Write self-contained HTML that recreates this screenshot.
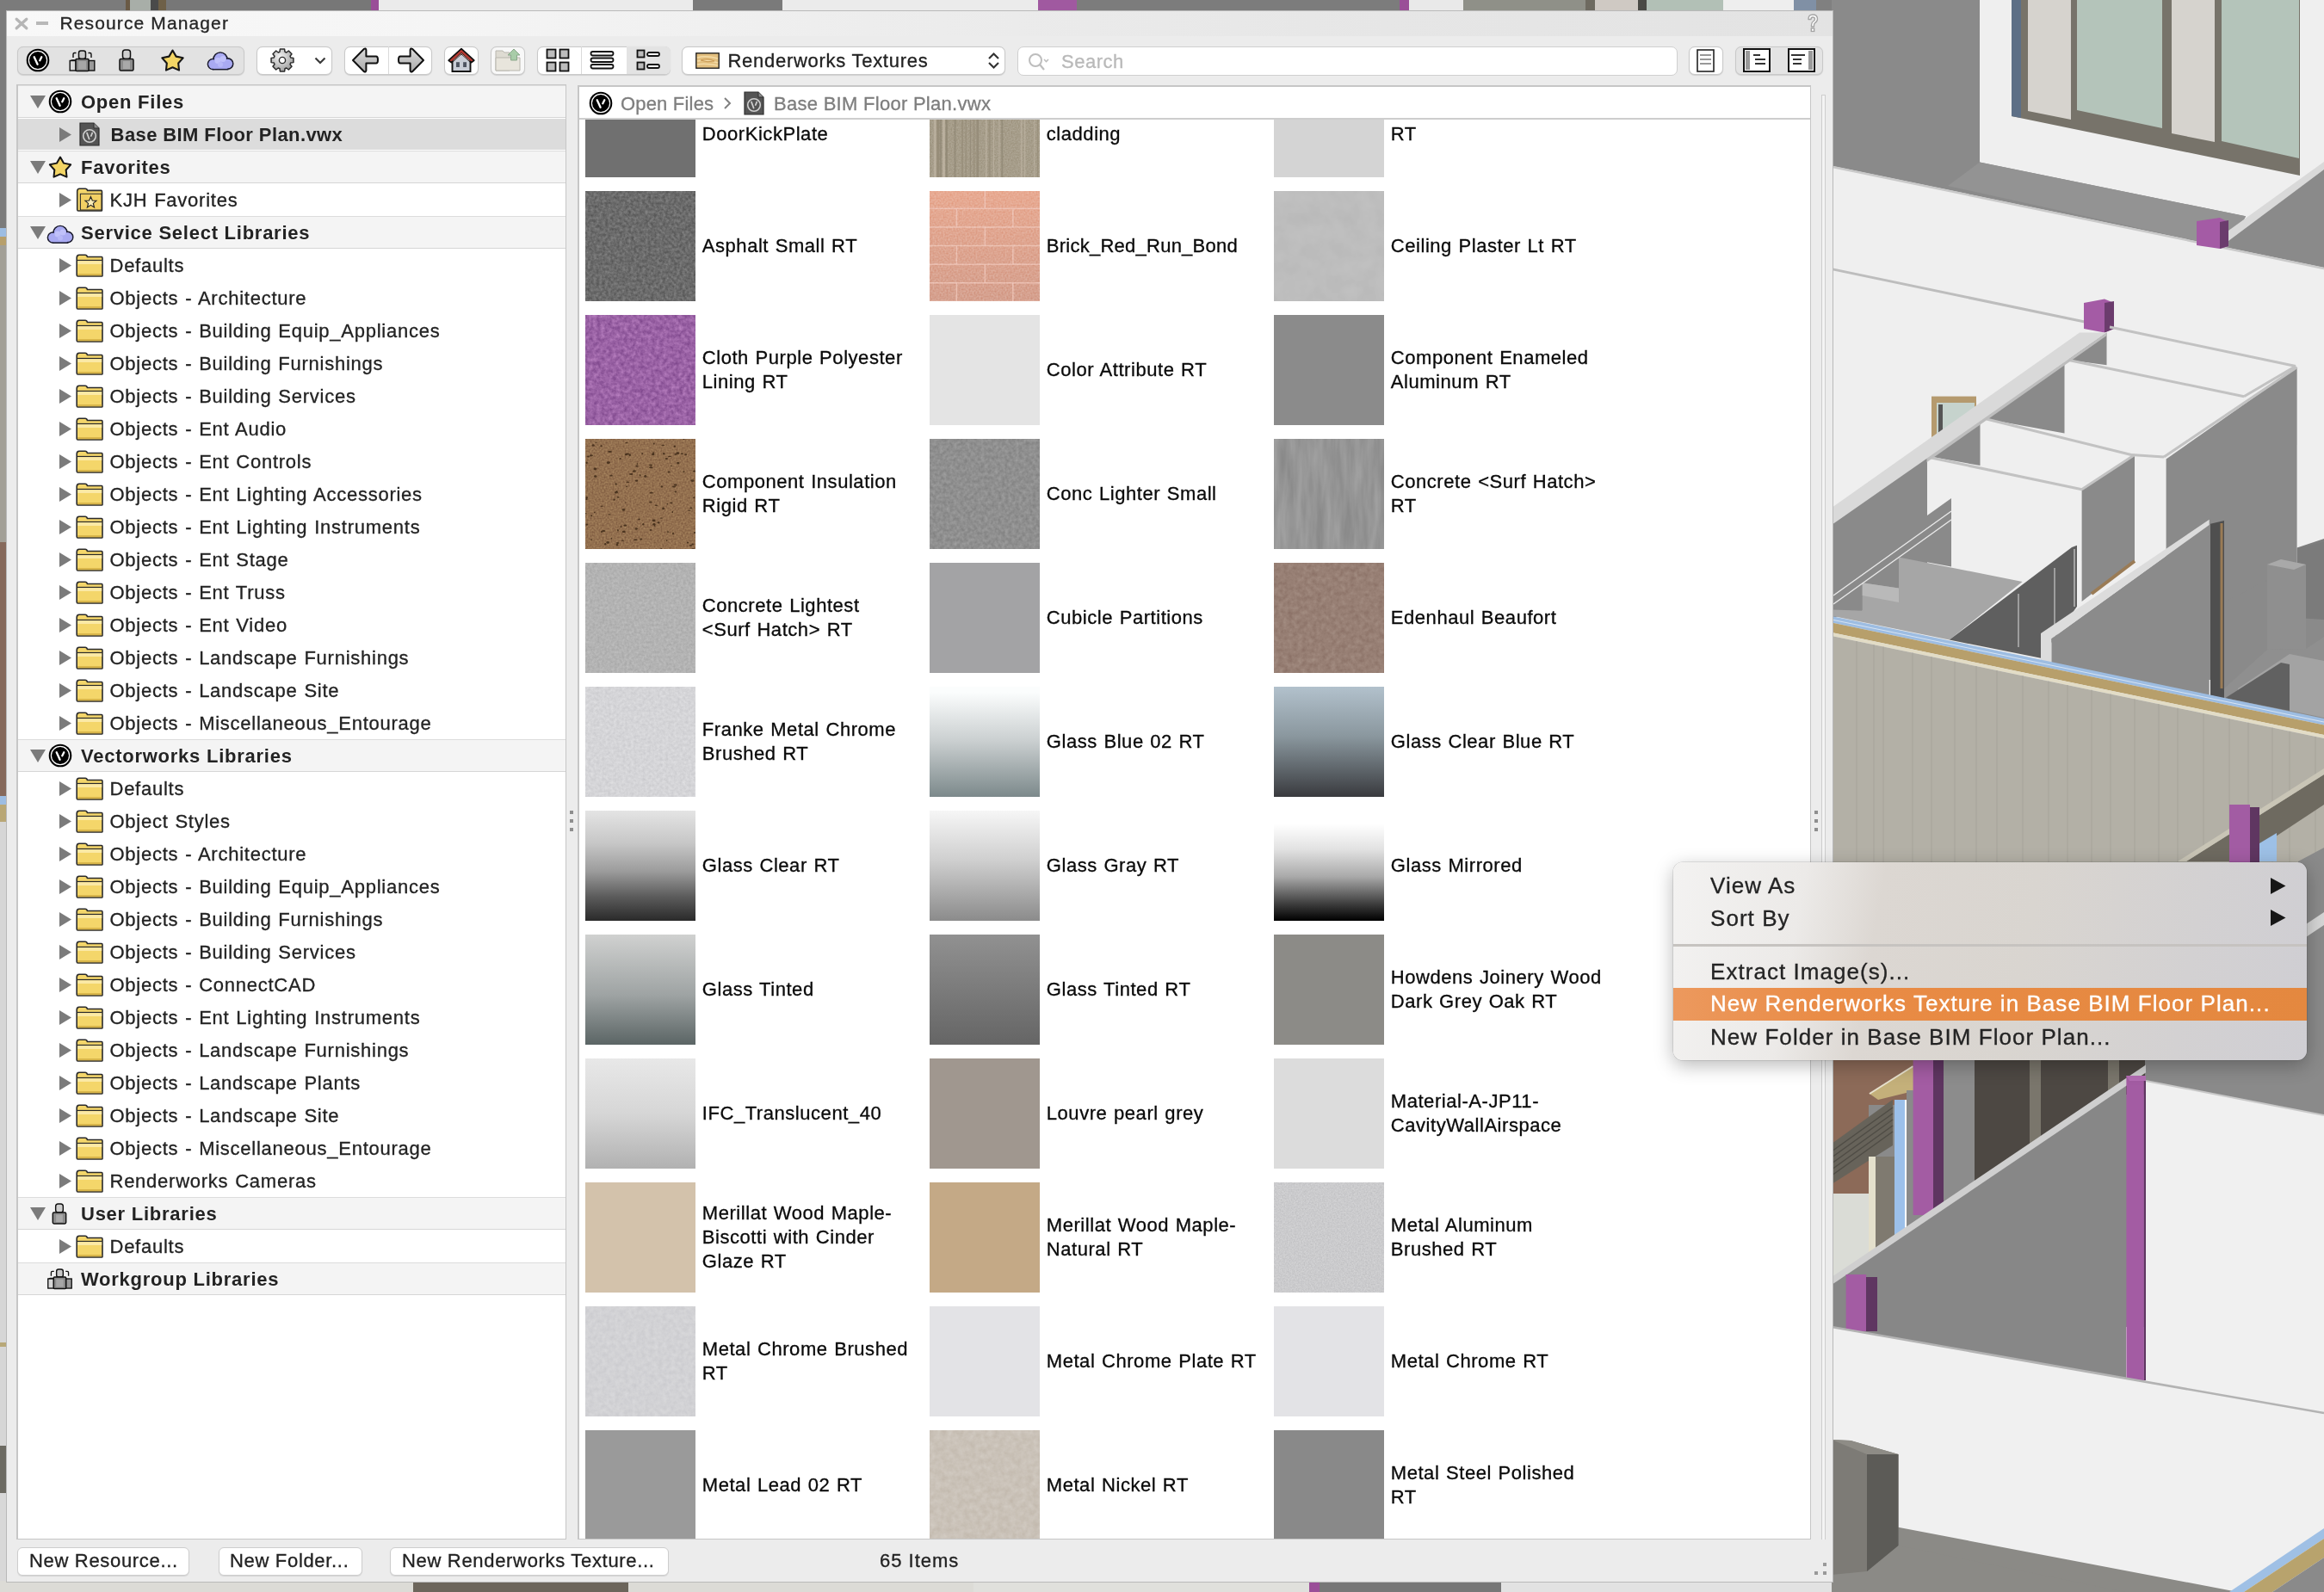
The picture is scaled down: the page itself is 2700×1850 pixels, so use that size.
<!DOCTYPE html>
<html><head><meta charset="utf-8"><title>Resource Manager</title>
<style>
html,body{margin:0;padding:0;}
body{width:2700px;height:1850px;position:relative;overflow:hidden;font-family:"Liberation Sans", sans-serif;background:#7a7a7a;}
svg{overflow:visible}
</style></head><body>
<svg style="position:absolute;left:0;top:0" width="2700" height="1850" viewBox="0 0 2700 1850"><rect x="0" y="0" width="2700" height="1850" fill="#7a7a7a"/><rect x="0" y="0" width="146" height="13" fill="#7b7b7b"/><rect x="146" y="0" width="5" height="13" fill="#6a5a45"/><rect x="151" y="0" width="24" height="13" fill="#a8aea8"/><rect x="175" y="0" width="9" height="13" fill="#4a4a4a"/><rect x="184" y="0" width="9" height="13" fill="#6e6048"/><rect x="193" y="0" width="238" height="13" fill="#777777"/><rect x="431" y="0" width="9" height="13" fill="#9a4f98"/><rect x="440" y="0" width="365" height="13" fill="#ebebeb"/><rect x="805" y="0" width="104" height="13" fill="#7a7a7a"/><rect x="909" y="0" width="297" height="13" fill="#ebebeb"/><rect x="1206" y="0" width="45" height="13" fill="#a059a0"/><rect x="1251" y="0" width="375" height="13" fill="#7c7c7c"/><rect x="1626" y="0" width="11" height="13" fill="#9a4f98"/><rect x="1637" y="0" width="63" height="13" fill="#e9e9e9"/><rect x="1700" y="0" width="142" height="13" fill="#8f9088"/><rect x="1842" y="0" width="11" height="13" fill="#6e6a60"/><rect x="1853" y="0" width="50" height="13" fill="#cfc9c3"/><rect x="1903" y="0" width="10" height="13" fill="#4a4a45"/><rect x="1913" y="0" width="89" height="13" fill="#b2c0b6"/><rect x="2002" y="0" width="82" height="13" fill="#eeeeee"/><rect x="2084" y="0" width="26" height="13" fill="#8090a5"/><rect x="2110" y="0" width="20" height="13" fill="#808080"/><rect x="0" y="0" width="8" height="265" fill="#7b7b7b"/><rect x="0" y="265" width="8" height="10" fill="#9dbde2"/><rect x="0" y="275" width="8" height="10" fill="#b79f6b"/><rect x="0" y="285" width="8" height="345" fill="#a29f96"/><rect x="0" y="630" width="8" height="295" fill="#86695b"/><rect x="0" y="925" width="8" height="10" fill="#9dbde2"/><rect x="0" y="935" width="8" height="20" fill="#b9a775"/><rect x="0" y="955" width="8" height="605" fill="#d6d6d6"/><rect x="0" y="1560" width="8" height="5" fill="#b8a878"/><rect x="0" y="1565" width="8" height="115" fill="#d6d6d6"/><rect x="0" y="1680" width="8" height="55" fill="#6c6a62"/><rect x="0" y="1735" width="8" height="115" fill="#d8d8d8"/><rect x="0" y="1837" width="480" height="13" fill="#dcdbd6"/><rect x="480" y="1837" width="250" height="13" fill="#6c655b"/><rect x="730" y="1837" width="401" height="13" fill="#dcdbd6"/><rect x="1131" y="1837" width="390" height="13" fill="#e0e0dc"/><rect x="1521" y="1837" width="12" height="13" fill="#9a4f98"/><rect x="1533" y="1837" width="211" height="13" fill="#777777"/><rect x="1744" y="1837" width="386" height="13" fill="#e2e2e2"/><rect x="2128" y="0" width="572" height="1850" fill="#efefef"/><polygon points="2128,0 2300,0 2300,188.5 2609,251.3 2590,288.236 2128,192.7868" fill="#8a8a8a" /><polygon points="2263,216 2300,188.5 2609,251.3 2590,288.236" fill="#939393" /><polygon points="2337,0 2672,0 2672,204 2337,135" fill="#77736a" /><polygon points="2337,0 2348,0 2348,137 2337,135" fill="#5d6f86" /><polygon points="2356,0 2406,0 2406,139 2356,129" fill="#d6d3ce" /><polygon points="2413,0 2512,0 2512,149 2413,128" fill="#b4c4ba" /><polygon points="2523,0 2573,0 2573,165 2523,155" fill="#d6d3ce" /><polygon points="2581,0 2671,0 2671,184 2581,164" fill="#b4c4ba" /><polygon points="2589,274 2700,192 2700,310.962 2590,288.236" fill="#8a8a8a" /><polygon points="2589,268 2700,188 2700,197 2589,280" fill="#d9d9d9" /><line x1="2128" y1="193.7868" x2="2700" y2="311.962" stroke="#c9c9c9" stroke-width="2.5"/><polygon points="2552,257 2579,253 2589,258 2589,286 2579,289 2552,285" fill="#a45ba5" /><polygon points="2579,258 2589,256 2589,286 2579,289" fill="#6b3c6d" /><line x1="2128" y1="312.6" x2="2422" y2="374" stroke="#bdbdbd" stroke-width="3"/><polygon points="2421,352 2445,347.6 2456,352 2456,382 2445,386.5 2421,382" fill="#a45ba5" /><polygon points="2445,352 2456,350 2456,382 2445,386.5" fill="#6b3c6d" /><rect x="2244" y="460.6" width="52" height="48" fill="#b59a6e"/><rect x="2250" y="468" width="44" height="40" fill="#c6d3cd"/><rect x="2252" y="470" width="5" height="38" fill="#555"/><polygon points="2447.5,386.5 2447.5,424.2 2401,418 2431,397.8" fill="#8a8a8a" /><polygon points="2398.5,421 2398.5,503.4 2308,487 2308,484.8" fill="#8a8a8a" /><polygon points="2300.5,490 2300.5,541 2245,531 2245,529" fill="#8a8a8a" /><polygon points="2239,533.4 2239,676 2128,700 2128,610" fill="#8a8a8a" /><polygon points="2418.6,568.7 2480,528.5 2480,651.6 2418.6,699" fill="#8a8a8a" /><polygon points="2516.6,533.5 2668.6,426.7 2668.6,716 2584,790 2516.6,790" fill="#8a8a8a" /><polygon points="2668.6,636.5 2700,626 2700,720 2668.6,716" fill="#7e7e7e" /><line x1="2451" y1="380" x2="2667" y2="425.5" stroke="#c2c2c2" stroke-width="3"/><line x1="2401" y1="418" x2="2607" y2="460.7" stroke="#c2c2c2" stroke-width="3"/><line x1="2607" y1="460.7" x2="2667" y2="425.5" stroke="#c2c2c2" stroke-width="3"/><line x1="2308" y1="487" x2="2476" y2="528.5" stroke="#c2c2c2" stroke-width="3"/><line x1="2476" y1="528.5" x2="2514" y2="531" stroke="#c2c2c2" stroke-width="3"/><line x1="2514" y1="531" x2="2668.6" y2="426.7" stroke="#c2c2c2" stroke-width="3"/><line x1="2239" y1="531" x2="2418.6" y2="568.7" stroke="#c2c2c2" stroke-width="3"/><line x1="2418.6" y1="568.7" x2="2480" y2="528.5" stroke="#c2c2c2" stroke-width="3"/><polygon points="2416,386.5 2447.5,386.5 2128,612 2128,590" fill="#d9d9d9" /><polygon points="2447.5,386.5 2447.5,390 2128,615 2128,610" fill="#bdbdbd" /><polygon points="2128,610 2238.5,533 2238.5,660 2206,680 2206,700 2128,718" fill="#8a8a8a" /><polygon points="2232,604 2267,579 2267,658.6 2232,652" fill="#8a8a8a" /><polygon points="2130,708.5 2163.7,709.8 2163.7,677.3 2206,683.6 2206,647.4 2349.6,676 2264.7,743.5 2130,716" fill="#a6a6a6" /><polygon points="2163.7,677.3 2206,683.6 2206,700 2163.7,692" fill="#b9b9b9" /><line x1="2130" y1="702" x2="2267" y2="604" stroke="#e8e8e8" stroke-width="1.5"/><line x1="2130" y1="692" x2="2267" y2="594" stroke="#e8e8e8" stroke-width="1.5"/><polygon points="2264.7,743.5 2407,636 2413,633.7 2413,704.8 2370.8,764.7" fill="#5f5f5f" /><line x1="2345" y1="690" x2="2345" y2="752" stroke="#c8c8c8" stroke-width="1.2"/><line x1="2387" y1="660" x2="2387" y2="760" stroke="#c8c8c8" stroke-width="1.2"/><line x1="2410" y1="638" x2="2410" y2="705" stroke="#d0d0d0" stroke-width="1.2"/><line x1="2430" y1="690" x2="2480" y2="652" stroke="#9a7b55" stroke-width="4"/><polygon points="2383.3,742.2 2566.7,610 2566.7,808 2383.3,771" fill="#8b8b8b" /><polygon points="2371,736 2566.7,603.7 2566.7,610 2383.3,742.2 2383.3,769.7 2371,767" fill="#dcdcdc" /><polygon points="2568,608.7 2584,605 2584,812 2568,808" fill="#4f4f4f" /><rect x="2579.5" y="608" width="3" height="192" fill="#9a7b55"/><polygon points="2584,700 2700,640 2700,840 2584,815" fill="#8a8a8a" /><polygon points="2669,637 2700,630 2700,720 2669,718" fill="#7b7b7b" /><polygon points="2634,656 2650,650 2679,656 2679,754 2634,755" fill="#8f8f8f" /><polygon points="2634,656 2650,650 2679,656 2665,662" fill="#a9a9a9" /><polygon points="2584,800 2634,755 2679,754 2700,740 2700,834.6 2584,811" fill="#8f8f8f" /><polygon points="2600,800 2660,760 2700,768 2700,834 2600,813" fill="#a3a3a3" /><polygon points="2584,812 2650,770 2660,772 2660,826 2584,811" fill="#616161" /><polygon points="2128,716 2700,835.0332 2700,842.5332 2128,723.5" fill="#9dbde2" /><line x1="2128" y1="720" x2="2700" y2="839.0332" stroke="#e6eef6" stroke-width="0.8"/><polygon points="2128,723.5 2700,842.5332 2700,854.0332 2128,735" fill="#b79f6b" /><polygon points="2128,735 2700,854.0332 2700,858.0332 2128,739" fill="#e2dcc6" /><polygon points="2128,739 2700,858.0332 2700,1010 2128,1010" fill="#b3b0a6" /><line x1="2157" y1="745.0349" x2="2157" y2="1010" stroke="#a8a59c" stroke-width="1.1"/><line x1="2177" y1="749.1969" x2="2177" y2="1010" stroke="#a8a59c" stroke-width="1.1"/><line x1="2188" y1="751.486" x2="2188" y2="1010" stroke="#a8a59c" stroke-width="1.1"/><line x1="2222" y1="758.5614" x2="2222" y2="1010" stroke="#a8a59c" stroke-width="1.1"/><line x1="2244" y1="763.1396" x2="2244" y2="1010" stroke="#a8a59c" stroke-width="1.1"/><line x1="2271" y1="768.7583" x2="2271" y2="1010" stroke="#a8a59c" stroke-width="1.1"/><line x1="2296" y1="773.9608" x2="2296" y2="1010" stroke="#a8a59c" stroke-width="1.1"/><line x1="2320" y1="778.9552" x2="2320" y2="1010" stroke="#a8a59c" stroke-width="1.1"/><line x1="2350" y1="785.1982" x2="2350" y2="1010" stroke="#a8a59c" stroke-width="1.1"/><line x1="2380" y1="791.4412" x2="2380" y2="1010" stroke="#a8a59c" stroke-width="1.1"/><line x1="2402" y1="796.0194" x2="2402" y2="1010" stroke="#a8a59c" stroke-width="1.1"/><line x1="2430" y1="801.8462" x2="2430" y2="1010" stroke="#a8a59c" stroke-width="1.1"/><line x1="2452" y1="806.4244" x2="2452" y2="1010" stroke="#a8a59c" stroke-width="1.1"/><line x1="2480" y1="812.2512" x2="2480" y2="1010" stroke="#a8a59c" stroke-width="1.1"/><line x1="2508" y1="818.078" x2="2508" y2="1010" stroke="#a8a59c" stroke-width="1.1"/><line x1="2530" y1="822.6562" x2="2530" y2="1010" stroke="#a8a59c" stroke-width="1.1"/><line x1="2560" y1="828.8992000000001" x2="2560" y2="1010" stroke="#a8a59c" stroke-width="1.1"/><line x1="2590" y1="835.1422" x2="2590" y2="1010" stroke="#a8a59c" stroke-width="1.1"/><line x1="2612" y1="839.7204" x2="2612" y2="1010" stroke="#a8a59c" stroke-width="1.1"/><line x1="2640" y1="845.5472" x2="2640" y2="1010" stroke="#a8a59c" stroke-width="1.1"/><line x1="2660" y1="849.7092" x2="2660" y2="1010" stroke="#a8a59c" stroke-width="1.1"/><line x1="2690" y1="855.9522" x2="2690" y2="1010" stroke="#a8a59c" stroke-width="1.1"/><polygon points="2540,1001 2700,900 2700,935 2600,1001" fill="#6e6a60" /><polygon points="2530,1001 2700,893 2700,900 2540,1001" fill="#c9c5b6" /><rect x="2590" y="935" width="24" height="67" fill="#a25ca3"/><rect x="2614" y="938" width="11" height="64" fill="#5f3661"/><polygon points="2625,980 2645,968 2645,1001 2625,1001" fill="#9dc0e6" /><polygon points="2670,1001 2700,985 2700,1232 2670,1232" fill="#8a8a8a" /><polygon points="2670,1080 2700,1060 2700,1075 2670,1095" fill="#d5d5d5" /><rect x="2128" y="1232" width="572" height="310" fill="#8a8a8a"/><rect x="2128" y="1232" width="95" height="52" fill="#8c6a58"/><rect x="2128" y="1282" width="43" height="105" fill="#8c6a58"/><polygon points="2128,1329 2199,1277.7 2199,1331 2128,1376" fill="#67635a" /><line x1="2128" y1="1338" x2="2199" y2="1287" stroke="#4f4c45" stroke-width="1.5"/><line x1="2128" y1="1345" x2="2199" y2="1294" stroke="#4f4c45" stroke-width="1.5"/><line x1="2128" y1="1352" x2="2199" y2="1301" stroke="#4f4c45" stroke-width="1.5"/><line x1="2128" y1="1359" x2="2199" y2="1308" stroke="#4f4c45" stroke-width="1.5"/><line x1="2128" y1="1366" x2="2199" y2="1315" stroke="#4f4c45" stroke-width="1.5"/><polygon points="2172,1271 2222.6,1239 2235,1265 2182,1278" fill="#c4b07a" /><line x1="2172" y1="1271" x2="2222.6" y2="1239" stroke="#e8e2cf" stroke-width="2"/><rect x="2128" y="1387" width="43" height="96" fill="#dadcd6"/><rect x="2171" y="1344" width="8" height="113" fill="#e4e0cc"/><rect x="2179" y="1344" width="22" height="113" fill="#7f7a70"/><rect x="2201" y="1278" width="12" height="158" fill="#9cc0ea"/><rect x="2213" y="1278" width="2" height="158" fill="#ffffff"/><rect x="2215" y="1267" width="22" height="200" fill="#8a8a8a"/><rect x="2222.6" y="1232" width="23.4" height="180" fill="#a35ca3"/><rect x="2246" y="1232" width="12" height="180" fill="#5e3560"/><rect x="2258" y="1232" width="36" height="180" fill="#8c8c8c"/><rect x="2294" y="1232" width="64" height="140" fill="#4d4843"/><rect x="2358" y="1232" width="13" height="110" fill="#7a766c"/><rect x="2371" y="1232" width="78" height="100" fill="#4d4843"/><rect x="2449" y="1232" width="13" height="50" fill="#7a766c"/><rect x="2462" y="1232" width="30" height="40" fill="#4d4843"/><polygon points="2128,1491 2470,1260 2470,1602 2128,1542" fill="#878787" /><polygon points="2128,1484 2502.5,1231 2502.5,1240 2128,1493" fill="#cfcfcf" /><rect x="2470.4" y="1250" width="20.5" height="354" fill="#a35ca3"/><rect x="2490.9" y="1252" width="2.5" height="352" fill="#5f3661"/><polygon points="2470,1250 2493,1250 2497,1256 2474,1256" fill="#b46db4" /><polygon points="2493,1232 2700,1232 2700,1296 2493,1256" fill="#8a8a8a" /><polygon points="2493,1256 2700,1296 2700,1850 2493,1850" fill="#f0f0f0" /><line x1="2493" y1="1256" x2="2700" y2="1296" stroke="#c8c8c8" stroke-width="2"/><rect x="2144.6" y="1481" width="23.5" height="66" fill="#a35ca3"/><rect x="2168" y="1484" width="13" height="63" fill="#5f3661"/><polygon points="2128,1542 2700,1642 2700,1850 2128,1850" fill="#f0f0f0" /><line x1="2128" y1="1542" x2="2700" y2="1642" stroke="#b3b3b3" stroke-width="2.5"/><polygon points="2128,1760 2600,1850 2128,1850" fill="#8b8a86" /><polygon points="2128,1673 2150,1674 2205.5,1690 2205.5,1796 2169,1826 2128,1830" fill="#7d7b76" /><polygon points="2169,1690 2205.5,1690 2205.5,1796 2169,1826" fill="#5c5b57" /><polygon points="2128,1673 2150,1674 2205.5,1690 2169,1690" fill="#8e8c86" /><polygon points="2205.5,1796 2600,1877 2205.5,1877" fill="#8b8a86" /><polygon points="2590,1850 2700,1776 2700,1788 2607,1850" fill="#9fc0e5" /><polygon points="2607,1850 2700,1788 2700,1810 2640,1850" fill="#b8a36d" /><polygon points="2640,1850 2700,1810 2700,1850" fill="#8a8a8a" /></svg><div style="position:absolute;left:7px;top:11.5px;width:2123px;height:1827px;background:#ececec;border:1px solid #b9b9b9;box-sizing:border-box;"></div><div style="position:absolute;left:8px;top:12.5px;width:2121px;height:29.5px;background:linear-gradient(90deg,#f8f8f8 0px,#f5f5f5 500px,#ededed 1000px,#e6e6e6 1600px,#e3e3e3 2121px);"></div><svg style="position:absolute;left:17px;top:20px" width="16" height="15" viewBox="0 0 16 15" ><path d="M2.2 2.2 L13.8 12.8 M13.8 2.2 L2.2 12.8" stroke="#b5b5b5" stroke-width="3.3" stroke-linecap="round"/></svg><div style="position:absolute;left:42px;top:25px;width:14px;height:4px;background:#b8b8b8;"></div><div style="position:absolute;left:69.5px;top:15.72px;font-size:21px;line-height:21px;font-weight:400;color:#262626;letter-spacing:1.12px;-webkit-text-stroke:0.32px #262626;white-space:nowrap;">Resource Manager</div><svg style="position:absolute;left:2098px;top:15px" width="16" height="24" viewBox="0 0 16 24" ><path d="M3 7.5 Q3 2 8 2 Q13.5 2 13.5 7 Q13.5 10 10.5 11.8 Q9.5 12.5 9.5 14.5 L9.5 16 L6.5 16 L6.5 14 Q6.5 11 9 9.5 Q10.5 8.5 10.5 7 Q10.5 5 8 5 Q6 5 6 7.5 Z" fill="#fff" stroke="#a5a5a5" stroke-width="1.4" stroke-linejoin="round"/><rect x="6.3" y="18" width="3.4" height="3.4" fill="#fff" stroke="#a5a5a5" stroke-width="1.4"/></svg><div style="position:absolute;left:19.5px;top:53.5px;width:264.5px;height:33.0px;background:#e2e2e2;border:1px solid #c9c9c9;border-radius:7px;box-sizing:border-box;box-shadow:0 0.5px 1px rgba(0,0,0,0.12);"></div><svg style="position:absolute;left:30.0px;top:56.0px" width="28" height="28" viewBox="0 0 28 28" ><circle cx="14" cy="14" r="13.3" fill="#000"/><circle cx="14" cy="14" r="10.6" fill="none" stroke="#fff" stroke-width="1.2"/><path d="M9.7 10.3 L13.6 18.8" stroke="#fff" stroke-width="2.3" stroke-linecap="round"/><path d="M18.3 10.3 L16.3 14.3" stroke="#fff" stroke-width="2.3" stroke-linecap="round"/></svg><svg style="position:absolute;left:80px;top:58px" width="31" height="25" viewBox="0 0 31 25" ><path d="M2 23.5 L2 14 Q2 12 4 12 L8 12" fill="none" stroke="#111" stroke-width="1.5"/><rect x="1.2" y="12.5" width="7" height="11.5" fill="#d8d8d8" stroke="#111" stroke-width="1.4"/><rect x="22.8" y="12.5" width="7" height="11.5" fill="#9a9a9a" stroke="#111" stroke-width="1.4"/><path d="M5 9 L5 5 Q5 3.5 6.5 3.5 L8.5 3.5 M26 9 L26 5 Q26 3.5 24.5 3.5 L22.5 3.5" fill="none" stroke="#111" stroke-width="1.4"/><rect x="11.5" y="1" width="8" height="9.5" rx="2.5" fill="#c9c9c9" stroke="#111" stroke-width="1.5"/><rect x="8" y="10.5" width="15" height="14" rx="1" fill="#8a8a8a" stroke="#111" stroke-width="1.5"/><rect x="11" y="13" width="9" height="9.5" fill="#a6a6a6"/></svg><svg style="position:absolute;left:138px;top:57px" width="18" height="26" viewBox="0 0 18 26" ><rect x="4.5" y="1" width="9" height="10.5" rx="3" fill="#cfcfcf" stroke="#111" stroke-width="1.5"/><rect x="1" y="11.5" width="16" height="13.5" rx="1.5" fill="#8c8c8c" stroke="#111" stroke-width="1.5"/><rect x="5" y="14" width="8" height="9" fill="#a9a9a9"/></svg><svg style="position:absolute;left:185.5px;top:56px" width="29" height="28" viewBox="0 0 28 28" ><path d="M14.00 2.50 L18.11 9.64 L26.17 11.34 L20.66 17.46 L21.52 25.66 L14.00 22.30 L6.48 25.66 L7.34 17.46 L1.83 11.34 L9.89 9.64 Z" fill="#f3d565" stroke="#161616" stroke-width="2.1" stroke-linejoin="round"/></svg><svg style="position:absolute;left:240px;top:58px" width="32" height="25" viewBox="0 0 32 24" ><circle cx="7.5" cy="16" r="6" fill="#a9aaf2" stroke="#1b1b2e" stroke-width="1.7"/><circle cx="16" cy="10.5" r="8" fill="#a9aaf2" stroke="#1b1b2e" stroke-width="1.7"/><circle cx="24.5" cy="15.5" r="6.2" fill="#a9aaf2" stroke="#1b1b2e" stroke-width="1.7"/><rect x="7.5" y="14" width="17" height="8.1" fill="#a9aaf2" stroke="#1b1b2e" stroke-width="1.7"/><circle cx="7.5" cy="16" r="5.15" fill="#a9aaf2"/><circle cx="16" cy="10.5" r="7.15" fill="#a9aaf2"/><circle cx="24.5" cy="15.5" r="5.3500000000000005" fill="#a9aaf2"/><rect x="7.5" y="12" width="17" height="9.2" fill="#a9aaf2"/><circle cx="13" cy="12" r="3.5" fill="#c0c1fa"/><circle cx="19" cy="10" r="3.5" fill="#c0c1fa"/><circle cx="16" cy="16.5" r="3" fill="#b7b8f7"/></svg><div style="position:absolute;left:298px;top:53.5px;width:88px;height:33.0px;background:#fff;border:1px solid #c9c9c9;border-radius:7px;box-sizing:border-box;box-shadow:0 0.5px 1px rgba(0,0,0,0.12);"></div><svg style="position:absolute;left:314px;top:56px" width="28" height="28" viewBox="0 0 28 28" ><defs><radialGradient id="gg" cx="0.4" cy="0.35" r="0.7"><stop offset="0" stop-color="#f4f4f4"/><stop offset="1" stop-color="#9a9a9a"/></radialGradient></defs><path d="M23.74 10.99 L26.94 11.38 L26.94 16.62 L23.74 17.01 L23.02 18.76 L25.00 21.29 L21.29 25.00 L18.76 23.02 L17.01 23.74 L16.62 26.94 L11.38 26.94 L10.99 23.74 L9.24 23.02 L6.71 25.00 L3.00 21.29 L4.98 18.76 L4.26 17.01 L1.06 16.62 L1.06 11.38 L4.26 10.99 L4.98 9.24 L3.00 6.71 L6.71 3.00 L9.24 4.98 L10.99 4.26 L11.38 1.06 L16.62 1.06 L17.01 4.26 L18.76 4.98 L21.29 3.00 L25.00 6.71 L23.02 9.24 Z" fill="url(#gg)" stroke="#2a2a2a" stroke-width="1.5" stroke-linejoin="round"/><circle cx="14" cy="14" r="3.6" fill="#fff" stroke="#2a2a2a" stroke-width="1.4"/></svg><svg style="position:absolute;left:365px;top:65.5px" width="14" height="9" viewBox="0 0 14 9" ><path d="M1.5 1.5 L7 7 L12.5 1.5" fill="none" stroke="#3a3a3a" stroke-width="2.2"/></svg><div style="position:absolute;left:400px;top:53.5px;width:102px;height:33.0px;background:#fff;border:1px solid #c9c9c9;border-radius:7px;box-sizing:border-box;box-shadow:0 0.5px 1px rgba(0,0,0,0.12);"></div><div style="position:absolute;left:450.5px;top:54px;width:1px;height:32px;background:#dadada;"></div><svg style="position:absolute;left:409px;top:55px" width="31" height="30" viewBox="0 0 31 30" ><defs><linearGradient id="ag" x1="0" y1="0" x2="0" y2="1"><stop offset="0" stop-color="#dcdcdc"/><stop offset="1" stop-color="#a9a9a9"/></linearGradient></defs><path d="M1 15 L14 1.8 Q15.8 0.6 16.4 3 L16.4 10.6 L28 10.6 Q30 10.6 30 14.6 Q30 18.6 28 18.6 L16.4 18.6 L16.4 27 Q15.8 29.4 14 28.2 Z" fill="url(#ag)" stroke="#111" stroke-width="2" stroke-linejoin="round"/></svg><svg style="position:absolute;left:461.5px;top:55px" width="31" height="30" viewBox="0 0 31 30" ><g transform="translate(31,0) scale(-1,1)"><defs><linearGradient id="ag2" x1="0" y1="0" x2="0" y2="1"><stop offset="0" stop-color="#dcdcdc"/><stop offset="1" stop-color="#a9a9a9"/></linearGradient></defs><path d="M1 15 L14 1.8 Q15.8 0.6 16.4 3 L16.4 10.6 L28 10.6 Q30 10.6 30 14.6 Q30 18.6 28 18.6 L16.4 18.6 L16.4 27 Q15.8 29.4 14 28.2 Z" fill="url(#ag2)" stroke="#111" stroke-width="2" stroke-linejoin="round"/></g></svg><div style="position:absolute;left:515.5px;top:53.5px;width:40.5px;height:33.0px;background:#fff;border:1px solid #c9c9c9;border-radius:7px;box-sizing:border-box;box-shadow:0 0.5px 1px rgba(0,0,0,0.12);"></div><svg style="position:absolute;left:520px;top:55px" width="32" height="29" viewBox="0 0 32 29" ><path d="M5.5 28 L5.5 14 L16 5 L26.5 14 L26.5 28 Z" fill="#c9cdd6" stroke="#111" stroke-width="1.9"/><path d="M1.2 15.2 L16 1.6 L30.8 15.2 L27.6 17.6 L16 7.2 L4.4 17.6 Z" fill="#b83a32" stroke="#111" stroke-width="1.7" stroke-linejoin="round"/><path d="M6.5 15.5 L16 7.3 L25.5 15.5" fill="none" stroke="#e8a9a0" stroke-width="0.8"/><rect x="10" y="17.2" width="3.9" height="5.8" fill="#4f5561"/><rect x="18.1" y="17.2" width="3.9" height="5.8" fill="#4f5561"/></svg><div style="position:absolute;left:570px;top:53.5px;width:39.5px;height:33.0px;background:#f8f8f8;border:1px solid #c9c9c9;border-radius:7px;box-sizing:border-box;box-shadow:0 0.5px 1px rgba(0,0,0,0.12);"></div><svg style="position:absolute;left:574px;top:55px" width="32" height="29" viewBox="0 0 32 29" ><path d="M2 4 L10 4 L12 6 L18 6 L18 27 L2 27 Z" fill="#dedbd2" stroke="#b8b6ae" stroke-width="1"/><path d="M2 12 L30 12 L30 27 L2 27 Z" fill="#e8e5dc" stroke="#b8b6ae" stroke-width="1"/><path d="M23 2 L30 9 L26.5 9 L26.5 15 L19.5 15 L19.5 9 L16 9 Z" fill="#a8cca8" stroke="#8aa78a" stroke-width="1"/></svg><div style="position:absolute;left:624px;top:53.5px;width:154.5px;height:33.0px;background:#fff;border:1px solid #c9c9c9;border-radius:7px;box-sizing:border-box;box-shadow:0 0.5px 1px rgba(0,0,0,0.12);"></div><div style="position:absolute;left:727.5px;top:54px;width:51px;height:32px;background:#e3e3e3;border-radius:0 6px 6px 0;"></div><div style="position:absolute;left:674.5px;top:54px;width:1px;height:32px;background:#dadada;"></div><svg style="position:absolute;left:634px;top:56px" width="28" height="28" viewBox="0 0 28 28" ><rect x="1.5" y="1.5" width="10" height="10" fill="#bdbdbd" stroke="#111" stroke-width="1.8"/><rect x="1.5" y="16.5" width="10" height="10" fill="#bdbdbd" stroke="#111" stroke-width="1.8"/><rect x="16.5" y="1.5" width="10" height="10" fill="#bdbdbd" stroke="#111" stroke-width="1.8"/><rect x="16.5" y="16.5" width="10" height="10" fill="#bdbdbd" stroke="#111" stroke-width="1.8"/></svg><svg style="position:absolute;left:685px;top:56px" width="29" height="28" viewBox="0 0 29 28" ><rect x="1.5" y="4" width="26" height="4.5" rx="2.2" fill="#fff" stroke="#111" stroke-width="1.8"/><rect x="1.5" y="11.5" width="26" height="4.5" rx="2.2" fill="#fff" stroke="#111" stroke-width="1.8"/><rect x="1.5" y="19" width="26" height="4.5" rx="2.2" fill="#fff" stroke="#111" stroke-width="1.8"/></svg><svg style="position:absolute;left:739px;top:56px" width="29" height="28" viewBox="0 0 29 28" ><rect x="1.5" y="2.5" width="8" height="8" fill="#bdbdbd" stroke="#111" stroke-width="1.8"/><rect x="1.5" y="16.5" width="8" height="8" fill="#bdbdbd" stroke="#111" stroke-width="1.8"/><rect x="13" y="5" width="14" height="4" rx="2" fill="#fff" stroke="#111" stroke-width="1.8"/><rect x="13" y="19" width="14" height="4" rx="2" fill="#fff" stroke="#111" stroke-width="1.8"/></svg><div style="position:absolute;left:791.5px;top:53.5px;width:376.5px;height:33.0px;background:#fff;border:1px solid #c9c9c9;border-radius:7px;box-sizing:border-box;box-shadow:0 0.5px 1px rgba(0,0,0,0.12);"></div><svg style="position:absolute;left:808px;top:61px" width="28" height="19" viewBox="0 0 28 19" ><rect x="0.8" y="0.8" width="26.4" height="17.4" fill="#e3bf7e" stroke="#222" stroke-width="1.4"/><path d="M2 6 Q12 3 26 7 M2 10 Q14 8 26 12 M2 14 Q10 12 26 15" fill="none" stroke="#f4dca8" stroke-width="1.5"/><path d="M6 9 Q14 6 22 10 Q14 12 6 9" fill="none" stroke="#c99a55" stroke-width="1"/></svg><div style="position:absolute;left:845.5px;top:59.88px;font-size:22px;line-height:22px;font-weight:400;color:#222;letter-spacing:0.72px;-webkit-text-stroke:0.32px #222;white-space:nowrap;">Renderworks Textures</div><svg style="position:absolute;left:1147px;top:60px" width="15" height="21" viewBox="0 0 15 21" ><path d="M2 8 L7.5 2.5 L13 8 M2 13 L7.5 18.5 L13 13" fill="none" stroke="#333" stroke-width="2.2"/></svg><div style="position:absolute;left:1181.5px;top:54px;width:767px;height:34px;background:#fff;border:1px solid #cfcfcf;border-radius:7px;box-sizing:border-box;"></div><svg style="position:absolute;left:1194px;top:61px" width="26" height="22" viewBox="0 0 26 22" ><circle cx="9" cy="9" r="7" fill="none" stroke="#bdbdbd" stroke-width="2"/><path d="M14 14 L19 20" stroke="#bdbdbd" stroke-width="2.2"/><path d="M19 8 L21.5 10.5 L24 8" fill="none" stroke="#bdbdbd" stroke-width="1.6"/></svg><div style="position:absolute;left:1233px;top:61.38px;font-size:22px;line-height:22px;font-weight:400;color:#b9b9b9;letter-spacing:0.5px;-webkit-text-stroke:0.32px #b9b9b9;white-space:nowrap;">Search</div><div style="position:absolute;left:1961.5px;top:53.5px;width:40.5px;height:33.0px;background:#fff;border:1px solid #c9c9c9;border-radius:7px;box-sizing:border-box;box-shadow:0 0.5px 1px rgba(0,0,0,0.12);"></div><svg style="position:absolute;left:1971px;top:57px" width="21" height="27" viewBox="0 0 21 27" ><rect x="1" y="1" width="19" height="25" fill="#fff" stroke="#222" stroke-width="1.6"/><path d="M4 7 L17 7 M4 12 L17 12 M4 17 L17 17" stroke="#777" stroke-width="1.5"/></svg><div style="position:absolute;left:2015.5px;top:53.5px;width:102.5px;height:33.0px;background:#e4e4e4;border:1px solid #c9c9c9;border-radius:7px;box-sizing:border-box;box-shadow:0 0.5px 1px rgba(0,0,0,0.12);"></div><svg style="position:absolute;left:2025px;top:56px" width="32" height="28" viewBox="0 0 32 28" ><rect x="1" y="1" width="30" height="26" fill="#fff" stroke="#111" stroke-width="2"/><rect x="3" y="3" width="5" height="22" fill="#9a9a9a"/><path d="M12 8 L20 8 M14 13 L26 13 M14 18 L26 18" stroke="#333" stroke-width="1.8"/></svg><svg style="position:absolute;left:2077px;top:56px" width="32" height="28" viewBox="0 0 32 28" ><rect x="1" y="1" width="30" height="26" fill="#fff" stroke="#111" stroke-width="2"/><rect x="24" y="3" width="5" height="22" fill="#9a9a9a"/><path d="M4 8 L20 8 M6 13 L16 13 M6 18 L16 18" stroke="#333" stroke-width="1.8"/></svg><div style="position:absolute;left:18.5px;top:98px;width:639px;height:1691px;background:#fff;border:2px solid #c6c6c6;border-right-width:1px;border-bottom-width:1px;box-sizing:border-box;"></div><div style="position:absolute;left:20.5px;top:99px;width:636px;height:38px;background:#f4f4f4;border-top:1px solid #dcdcdc;border-bottom:1px solid #d6d6d6;box-sizing:border-box;"></div><svg style="position:absolute;left:35px;top:111px" width="18" height="15" viewBox="0 0 18 15" ><path d="M0 0 L18 0 L9.0 15 Z" fill="#7b7b7b"/></svg><svg style="position:absolute;left:56.0px;top:103.7px" width="28" height="28" viewBox="0 0 28 28" ><circle cx="14" cy="14" r="13.3" fill="#000"/><circle cx="14" cy="14" r="10.6" fill="none" stroke="#fff" stroke-width="1.2"/><path d="M9.7 10.3 L13.6 18.8" stroke="#fff" stroke-width="2.3" stroke-linecap="round"/><path d="M18.3 10.3 L16.3 14.3" stroke="#fff" stroke-width="2.3" stroke-linecap="round"/></svg><div style="position:absolute;left:94px;top:107.88px;font-size:22px;line-height:22px;font-weight:700;color:#232323;letter-spacing:0.75px;white-space:nowrap;">Open Files</div><div style="position:absolute;left:20.5px;top:137.5px;width:636px;height:36.5px;background:#dcdcdc;"></div><svg style="position:absolute;left:69px;top:148px" width="14" height="17" viewBox="0 0 14 17" ><path d="M0 0 L14 8.5 L0 17 Z" fill="#7b7b7b"/></svg><svg style="position:absolute;left:92px;top:142px" width="24" height="28" viewBox="0 0 24 28" ><path d="M1 1 L17 1 L23 7 L23 27 L1 27 Z" fill="#545454" stroke="#2e2e2e" stroke-width="1.2"/><path d="M17 1 L17 7 L23 7" fill="#8a8a8a" stroke="#2e2e2e" stroke-width="1"/><circle cx="12" cy="16" r="7.3" fill="none" stroke="#cfcfcf" stroke-width="1.6"/><path d="M9 12.5 L11.6 19.5 M15.2 12.5 L13.8 16" stroke="#cfcfcf" stroke-width="1.8" stroke-linecap="round"/></svg><div style="position:absolute;left:128.6px;top:145.78px;font-size:22px;line-height:22px;font-weight:700;color:#232323;letter-spacing:0.4px;white-space:nowrap;">Base BIM Floor Plan.vwx</div><div style="position:absolute;left:20.5px;top:175px;width:636px;height:38px;background:#f4f4f4;border-top:1px solid #dcdcdc;border-bottom:1px solid #d6d6d6;box-sizing:border-box;"></div><svg style="position:absolute;left:35px;top:187px" width="18" height="15" viewBox="0 0 18 15" ><path d="M0 0 L18 0 L9.0 15 Z" fill="#7b7b7b"/></svg><svg style="position:absolute;left:56px;top:180px" width="28" height="28" viewBox="0 0 28 28" ><path d="M14.00 2.50 L18.11 9.64 L26.17 11.34 L20.66 17.46 L21.52 25.66 L14.00 22.30 L6.48 25.66 L7.34 17.46 L1.83 11.34 L9.89 9.64 Z" fill="#f3d565" stroke="#161616" stroke-width="2.0" stroke-linejoin="round"/></svg><div style="position:absolute;left:94px;top:183.88px;font-size:22px;line-height:22px;font-weight:700;color:#232323;letter-spacing:0.75px;white-space:nowrap;">Favorites</div><svg style="position:absolute;left:69px;top:224px" width="14" height="17" viewBox="0 0 14 17" ><path d="M0 0 L14 8.5 L0 17 Z" fill="#7b7b7b"/></svg><svg style="position:absolute;left:88px;top:218px" width="32" height="28" viewBox="0 0 32 29" ><path d="M1.2 4.5 Q1.2 1.2 4 1.2 L11 1.2 Q13 1.2 13.5 3.5 L30 3.5 Q31 3.5 31 5 L31 27.5 Q31 28 30 28 L2.5 28 Q1.2 28 1.2 26.5 Z" fill="#f4d66a" stroke="#2a2a2a" stroke-width="1.6"/><path d="M5 7.5 L30.5 7.5 L30.5 27 L5 27 Z" fill="#f2d064" stroke="#2a2a2a" stroke-width="1.1"/><path d="M17.5 11 L19.4 15.6 L24.2 15.9 L20.5 19 L21.7 23.7 L17.5 21.1 L13.3 23.7 L14.5 19 L10.8 15.9 L15.6 15.6 Z" fill="#faeeb8" stroke="#222" stroke-width="1.2"/></svg><div style="position:absolute;left:127.5px;top:221.78px;font-size:22px;line-height:22px;font-weight:400;color:#232323;letter-spacing:0.75px;word-spacing:1px;-webkit-text-stroke:0.32px #232323;white-space:nowrap;">KJH Favorites</div><div style="position:absolute;left:20.5px;top:251px;width:636px;height:38px;background:#f4f4f4;border-top:1px solid #dcdcdc;border-bottom:1px solid #d6d6d6;box-sizing:border-box;"></div><svg style="position:absolute;left:35px;top:263px" width="18" height="15" viewBox="0 0 18 15" ><path d="M0 0 L18 0 L9.0 15 Z" fill="#7b7b7b"/></svg><svg style="position:absolute;left:54px;top:259.5px" width="32" height="24" viewBox="0 0 32 24" ><circle cx="7.5" cy="16" r="6" fill="#a9aaf2" stroke="#1b1b2e" stroke-width="1.7"/><circle cx="16" cy="10.5" r="8" fill="#a9aaf2" stroke="#1b1b2e" stroke-width="1.7"/><circle cx="24.5" cy="15.5" r="6.2" fill="#a9aaf2" stroke="#1b1b2e" stroke-width="1.7"/><rect x="7.5" y="14" width="17" height="8.1" fill="#a9aaf2" stroke="#1b1b2e" stroke-width="1.7"/><circle cx="7.5" cy="16" r="5.15" fill="#a9aaf2"/><circle cx="16" cy="10.5" r="7.15" fill="#a9aaf2"/><circle cx="24.5" cy="15.5" r="5.3500000000000005" fill="#a9aaf2"/><rect x="7.5" y="12" width="17" height="9.2" fill="#a9aaf2"/><circle cx="13" cy="12" r="3.5" fill="#c0c1fa"/><circle cx="19" cy="10" r="3.5" fill="#c0c1fa"/><circle cx="16" cy="16.5" r="3" fill="#b7b8f7"/></svg><div style="position:absolute;left:94px;top:259.88px;font-size:22px;line-height:22px;font-weight:700;color:#232323;letter-spacing:0.75px;white-space:nowrap;">Service Select Libraries</div><svg style="position:absolute;left:69px;top:300px" width="14" height="17" viewBox="0 0 14 17" ><path d="M0 0 L14 8.5 L0 17 Z" fill="#7b7b7b"/></svg><svg style="position:absolute;left:88px;top:294.5px" width="32" height="27" viewBox="0 0 32 27" ><path d="M1.2 4.5 Q1.2 1.2 4 1.2 L11 1.2 Q13 1.2 13.5 3.5 L30 3.5 Q31 3.5 31 5 L31 25.5 Q31 26 30 26 L2.5 26 Q1.2 26 1.2 24.5 Z" fill="#f4d66a" stroke="#2a2a2a" stroke-width="1.6"/><path d="M2 7.5 L30.5 7.5" stroke="#2a2a2a" stroke-width="1.3"/><path d="M2.2 8.2 L30.2 8.2 L30.2 12 L2.2 12 Z" fill="#fbe9a6"/><path d="M2.2 23 L30.2 23 L30.2 25.2 L2.2 25.2 Z" fill="#d9b64a"/></svg><div style="position:absolute;left:127.5px;top:297.78px;font-size:22px;line-height:22px;font-weight:400;color:#232323;letter-spacing:0.75px;word-spacing:1px;-webkit-text-stroke:0.32px #232323;white-space:nowrap;">Defaults</div><svg style="position:absolute;left:69px;top:338px" width="14" height="17" viewBox="0 0 14 17" ><path d="M0 0 L14 8.5 L0 17 Z" fill="#7b7b7b"/></svg><svg style="position:absolute;left:88px;top:332.5px" width="32" height="27" viewBox="0 0 32 27" ><path d="M1.2 4.5 Q1.2 1.2 4 1.2 L11 1.2 Q13 1.2 13.5 3.5 L30 3.5 Q31 3.5 31 5 L31 25.5 Q31 26 30 26 L2.5 26 Q1.2 26 1.2 24.5 Z" fill="#f4d66a" stroke="#2a2a2a" stroke-width="1.6"/><path d="M2 7.5 L30.5 7.5" stroke="#2a2a2a" stroke-width="1.3"/><path d="M2.2 8.2 L30.2 8.2 L30.2 12 L2.2 12 Z" fill="#fbe9a6"/><path d="M2.2 23 L30.2 23 L30.2 25.2 L2.2 25.2 Z" fill="#d9b64a"/></svg><div style="position:absolute;left:127.5px;top:335.78px;font-size:22px;line-height:22px;font-weight:400;color:#232323;letter-spacing:0.75px;word-spacing:1px;-webkit-text-stroke:0.32px #232323;white-space:nowrap;">Objects - Architecture</div><svg style="position:absolute;left:69px;top:376px" width="14" height="17" viewBox="0 0 14 17" ><path d="M0 0 L14 8.5 L0 17 Z" fill="#7b7b7b"/></svg><svg style="position:absolute;left:88px;top:370.5px" width="32" height="27" viewBox="0 0 32 27" ><path d="M1.2 4.5 Q1.2 1.2 4 1.2 L11 1.2 Q13 1.2 13.5 3.5 L30 3.5 Q31 3.5 31 5 L31 25.5 Q31 26 30 26 L2.5 26 Q1.2 26 1.2 24.5 Z" fill="#f4d66a" stroke="#2a2a2a" stroke-width="1.6"/><path d="M2 7.5 L30.5 7.5" stroke="#2a2a2a" stroke-width="1.3"/><path d="M2.2 8.2 L30.2 8.2 L30.2 12 L2.2 12 Z" fill="#fbe9a6"/><path d="M2.2 23 L30.2 23 L30.2 25.2 L2.2 25.2 Z" fill="#d9b64a"/></svg><div style="position:absolute;left:127.5px;top:373.78px;font-size:22px;line-height:22px;font-weight:400;color:#232323;letter-spacing:0.75px;word-spacing:1px;-webkit-text-stroke:0.32px #232323;white-space:nowrap;">Objects - Building Equip_Appliances</div><svg style="position:absolute;left:69px;top:414px" width="14" height="17" viewBox="0 0 14 17" ><path d="M0 0 L14 8.5 L0 17 Z" fill="#7b7b7b"/></svg><svg style="position:absolute;left:88px;top:408.5px" width="32" height="27" viewBox="0 0 32 27" ><path d="M1.2 4.5 Q1.2 1.2 4 1.2 L11 1.2 Q13 1.2 13.5 3.5 L30 3.5 Q31 3.5 31 5 L31 25.5 Q31 26 30 26 L2.5 26 Q1.2 26 1.2 24.5 Z" fill="#f4d66a" stroke="#2a2a2a" stroke-width="1.6"/><path d="M2 7.5 L30.5 7.5" stroke="#2a2a2a" stroke-width="1.3"/><path d="M2.2 8.2 L30.2 8.2 L30.2 12 L2.2 12 Z" fill="#fbe9a6"/><path d="M2.2 23 L30.2 23 L30.2 25.2 L2.2 25.2 Z" fill="#d9b64a"/></svg><div style="position:absolute;left:127.5px;top:411.78px;font-size:22px;line-height:22px;font-weight:400;color:#232323;letter-spacing:0.75px;word-spacing:1px;-webkit-text-stroke:0.32px #232323;white-space:nowrap;">Objects - Building Furnishings</div><svg style="position:absolute;left:69px;top:452px" width="14" height="17" viewBox="0 0 14 17" ><path d="M0 0 L14 8.5 L0 17 Z" fill="#7b7b7b"/></svg><svg style="position:absolute;left:88px;top:446.5px" width="32" height="27" viewBox="0 0 32 27" ><path d="M1.2 4.5 Q1.2 1.2 4 1.2 L11 1.2 Q13 1.2 13.5 3.5 L30 3.5 Q31 3.5 31 5 L31 25.5 Q31 26 30 26 L2.5 26 Q1.2 26 1.2 24.5 Z" fill="#f4d66a" stroke="#2a2a2a" stroke-width="1.6"/><path d="M2 7.5 L30.5 7.5" stroke="#2a2a2a" stroke-width="1.3"/><path d="M2.2 8.2 L30.2 8.2 L30.2 12 L2.2 12 Z" fill="#fbe9a6"/><path d="M2.2 23 L30.2 23 L30.2 25.2 L2.2 25.2 Z" fill="#d9b64a"/></svg><div style="position:absolute;left:127.5px;top:449.78px;font-size:22px;line-height:22px;font-weight:400;color:#232323;letter-spacing:0.75px;word-spacing:1px;-webkit-text-stroke:0.32px #232323;white-space:nowrap;">Objects - Building Services</div><svg style="position:absolute;left:69px;top:490px" width="14" height="17" viewBox="0 0 14 17" ><path d="M0 0 L14 8.5 L0 17 Z" fill="#7b7b7b"/></svg><svg style="position:absolute;left:88px;top:484.5px" width="32" height="27" viewBox="0 0 32 27" ><path d="M1.2 4.5 Q1.2 1.2 4 1.2 L11 1.2 Q13 1.2 13.5 3.5 L30 3.5 Q31 3.5 31 5 L31 25.5 Q31 26 30 26 L2.5 26 Q1.2 26 1.2 24.5 Z" fill="#f4d66a" stroke="#2a2a2a" stroke-width="1.6"/><path d="M2 7.5 L30.5 7.5" stroke="#2a2a2a" stroke-width="1.3"/><path d="M2.2 8.2 L30.2 8.2 L30.2 12 L2.2 12 Z" fill="#fbe9a6"/><path d="M2.2 23 L30.2 23 L30.2 25.2 L2.2 25.2 Z" fill="#d9b64a"/></svg><div style="position:absolute;left:127.5px;top:487.78px;font-size:22px;line-height:22px;font-weight:400;color:#232323;letter-spacing:0.75px;word-spacing:1px;-webkit-text-stroke:0.32px #232323;white-space:nowrap;">Objects - Ent Audio</div><svg style="position:absolute;left:69px;top:528px" width="14" height="17" viewBox="0 0 14 17" ><path d="M0 0 L14 8.5 L0 17 Z" fill="#7b7b7b"/></svg><svg style="position:absolute;left:88px;top:522.5px" width="32" height="27" viewBox="0 0 32 27" ><path d="M1.2 4.5 Q1.2 1.2 4 1.2 L11 1.2 Q13 1.2 13.5 3.5 L30 3.5 Q31 3.5 31 5 L31 25.5 Q31 26 30 26 L2.5 26 Q1.2 26 1.2 24.5 Z" fill="#f4d66a" stroke="#2a2a2a" stroke-width="1.6"/><path d="M2 7.5 L30.5 7.5" stroke="#2a2a2a" stroke-width="1.3"/><path d="M2.2 8.2 L30.2 8.2 L30.2 12 L2.2 12 Z" fill="#fbe9a6"/><path d="M2.2 23 L30.2 23 L30.2 25.2 L2.2 25.2 Z" fill="#d9b64a"/></svg><div style="position:absolute;left:127.5px;top:525.78px;font-size:22px;line-height:22px;font-weight:400;color:#232323;letter-spacing:0.75px;word-spacing:1px;-webkit-text-stroke:0.32px #232323;white-space:nowrap;">Objects - Ent Controls</div><svg style="position:absolute;left:69px;top:566px" width="14" height="17" viewBox="0 0 14 17" ><path d="M0 0 L14 8.5 L0 17 Z" fill="#7b7b7b"/></svg><svg style="position:absolute;left:88px;top:560.5px" width="32" height="27" viewBox="0 0 32 27" ><path d="M1.2 4.5 Q1.2 1.2 4 1.2 L11 1.2 Q13 1.2 13.5 3.5 L30 3.5 Q31 3.5 31 5 L31 25.5 Q31 26 30 26 L2.5 26 Q1.2 26 1.2 24.5 Z" fill="#f4d66a" stroke="#2a2a2a" stroke-width="1.6"/><path d="M2 7.5 L30.5 7.5" stroke="#2a2a2a" stroke-width="1.3"/><path d="M2.2 8.2 L30.2 8.2 L30.2 12 L2.2 12 Z" fill="#fbe9a6"/><path d="M2.2 23 L30.2 23 L30.2 25.2 L2.2 25.2 Z" fill="#d9b64a"/></svg><div style="position:absolute;left:127.5px;top:563.78px;font-size:22px;line-height:22px;font-weight:400;color:#232323;letter-spacing:0.75px;word-spacing:1px;-webkit-text-stroke:0.32px #232323;white-space:nowrap;">Objects - Ent Lighting Accessories</div><svg style="position:absolute;left:69px;top:604px" width="14" height="17" viewBox="0 0 14 17" ><path d="M0 0 L14 8.5 L0 17 Z" fill="#7b7b7b"/></svg><svg style="position:absolute;left:88px;top:598.5px" width="32" height="27" viewBox="0 0 32 27" ><path d="M1.2 4.5 Q1.2 1.2 4 1.2 L11 1.2 Q13 1.2 13.5 3.5 L30 3.5 Q31 3.5 31 5 L31 25.5 Q31 26 30 26 L2.5 26 Q1.2 26 1.2 24.5 Z" fill="#f4d66a" stroke="#2a2a2a" stroke-width="1.6"/><path d="M2 7.5 L30.5 7.5" stroke="#2a2a2a" stroke-width="1.3"/><path d="M2.2 8.2 L30.2 8.2 L30.2 12 L2.2 12 Z" fill="#fbe9a6"/><path d="M2.2 23 L30.2 23 L30.2 25.2 L2.2 25.2 Z" fill="#d9b64a"/></svg><div style="position:absolute;left:127.5px;top:601.78px;font-size:22px;line-height:22px;font-weight:400;color:#232323;letter-spacing:0.75px;word-spacing:1px;-webkit-text-stroke:0.32px #232323;white-space:nowrap;">Objects - Ent Lighting Instruments</div><svg style="position:absolute;left:69px;top:642px" width="14" height="17" viewBox="0 0 14 17" ><path d="M0 0 L14 8.5 L0 17 Z" fill="#7b7b7b"/></svg><svg style="position:absolute;left:88px;top:636.5px" width="32" height="27" viewBox="0 0 32 27" ><path d="M1.2 4.5 Q1.2 1.2 4 1.2 L11 1.2 Q13 1.2 13.5 3.5 L30 3.5 Q31 3.5 31 5 L31 25.5 Q31 26 30 26 L2.5 26 Q1.2 26 1.2 24.5 Z" fill="#f4d66a" stroke="#2a2a2a" stroke-width="1.6"/><path d="M2 7.5 L30.5 7.5" stroke="#2a2a2a" stroke-width="1.3"/><path d="M2.2 8.2 L30.2 8.2 L30.2 12 L2.2 12 Z" fill="#fbe9a6"/><path d="M2.2 23 L30.2 23 L30.2 25.2 L2.2 25.2 Z" fill="#d9b64a"/></svg><div style="position:absolute;left:127.5px;top:639.78px;font-size:22px;line-height:22px;font-weight:400;color:#232323;letter-spacing:0.75px;word-spacing:1px;-webkit-text-stroke:0.32px #232323;white-space:nowrap;">Objects - Ent Stage</div><svg style="position:absolute;left:69px;top:680px" width="14" height="17" viewBox="0 0 14 17" ><path d="M0 0 L14 8.5 L0 17 Z" fill="#7b7b7b"/></svg><svg style="position:absolute;left:88px;top:674.5px" width="32" height="27" viewBox="0 0 32 27" ><path d="M1.2 4.5 Q1.2 1.2 4 1.2 L11 1.2 Q13 1.2 13.5 3.5 L30 3.5 Q31 3.5 31 5 L31 25.5 Q31 26 30 26 L2.5 26 Q1.2 26 1.2 24.5 Z" fill="#f4d66a" stroke="#2a2a2a" stroke-width="1.6"/><path d="M2 7.5 L30.5 7.5" stroke="#2a2a2a" stroke-width="1.3"/><path d="M2.2 8.2 L30.2 8.2 L30.2 12 L2.2 12 Z" fill="#fbe9a6"/><path d="M2.2 23 L30.2 23 L30.2 25.2 L2.2 25.2 Z" fill="#d9b64a"/></svg><div style="position:absolute;left:127.5px;top:677.78px;font-size:22px;line-height:22px;font-weight:400;color:#232323;letter-spacing:0.75px;word-spacing:1px;-webkit-text-stroke:0.32px #232323;white-space:nowrap;">Objects - Ent Truss</div><svg style="position:absolute;left:69px;top:718px" width="14" height="17" viewBox="0 0 14 17" ><path d="M0 0 L14 8.5 L0 17 Z" fill="#7b7b7b"/></svg><svg style="position:absolute;left:88px;top:712.5px" width="32" height="27" viewBox="0 0 32 27" ><path d="M1.2 4.5 Q1.2 1.2 4 1.2 L11 1.2 Q13 1.2 13.5 3.5 L30 3.5 Q31 3.5 31 5 L31 25.5 Q31 26 30 26 L2.5 26 Q1.2 26 1.2 24.5 Z" fill="#f4d66a" stroke="#2a2a2a" stroke-width="1.6"/><path d="M2 7.5 L30.5 7.5" stroke="#2a2a2a" stroke-width="1.3"/><path d="M2.2 8.2 L30.2 8.2 L30.2 12 L2.2 12 Z" fill="#fbe9a6"/><path d="M2.2 23 L30.2 23 L30.2 25.2 L2.2 25.2 Z" fill="#d9b64a"/></svg><div style="position:absolute;left:127.5px;top:715.78px;font-size:22px;line-height:22px;font-weight:400;color:#232323;letter-spacing:0.75px;word-spacing:1px;-webkit-text-stroke:0.32px #232323;white-space:nowrap;">Objects - Ent Video</div><svg style="position:absolute;left:69px;top:756px" width="14" height="17" viewBox="0 0 14 17" ><path d="M0 0 L14 8.5 L0 17 Z" fill="#7b7b7b"/></svg><svg style="position:absolute;left:88px;top:750.5px" width="32" height="27" viewBox="0 0 32 27" ><path d="M1.2 4.5 Q1.2 1.2 4 1.2 L11 1.2 Q13 1.2 13.5 3.5 L30 3.5 Q31 3.5 31 5 L31 25.5 Q31 26 30 26 L2.5 26 Q1.2 26 1.2 24.5 Z" fill="#f4d66a" stroke="#2a2a2a" stroke-width="1.6"/><path d="M2 7.5 L30.5 7.5" stroke="#2a2a2a" stroke-width="1.3"/><path d="M2.2 8.2 L30.2 8.2 L30.2 12 L2.2 12 Z" fill="#fbe9a6"/><path d="M2.2 23 L30.2 23 L30.2 25.2 L2.2 25.2 Z" fill="#d9b64a"/></svg><div style="position:absolute;left:127.5px;top:753.78px;font-size:22px;line-height:22px;font-weight:400;color:#232323;letter-spacing:0.75px;word-spacing:1px;-webkit-text-stroke:0.32px #232323;white-space:nowrap;">Objects - Landscape Furnishings</div><svg style="position:absolute;left:69px;top:794px" width="14" height="17" viewBox="0 0 14 17" ><path d="M0 0 L14 8.5 L0 17 Z" fill="#7b7b7b"/></svg><svg style="position:absolute;left:88px;top:788.5px" width="32" height="27" viewBox="0 0 32 27" ><path d="M1.2 4.5 Q1.2 1.2 4 1.2 L11 1.2 Q13 1.2 13.5 3.5 L30 3.5 Q31 3.5 31 5 L31 25.5 Q31 26 30 26 L2.5 26 Q1.2 26 1.2 24.5 Z" fill="#f4d66a" stroke="#2a2a2a" stroke-width="1.6"/><path d="M2 7.5 L30.5 7.5" stroke="#2a2a2a" stroke-width="1.3"/><path d="M2.2 8.2 L30.2 8.2 L30.2 12 L2.2 12 Z" fill="#fbe9a6"/><path d="M2.2 23 L30.2 23 L30.2 25.2 L2.2 25.2 Z" fill="#d9b64a"/></svg><div style="position:absolute;left:127.5px;top:791.78px;font-size:22px;line-height:22px;font-weight:400;color:#232323;letter-spacing:0.75px;word-spacing:1px;-webkit-text-stroke:0.32px #232323;white-space:nowrap;">Objects - Landscape Site</div><svg style="position:absolute;left:69px;top:832px" width="14" height="17" viewBox="0 0 14 17" ><path d="M0 0 L14 8.5 L0 17 Z" fill="#7b7b7b"/></svg><svg style="position:absolute;left:88px;top:826.5px" width="32" height="27" viewBox="0 0 32 27" ><path d="M1.2 4.5 Q1.2 1.2 4 1.2 L11 1.2 Q13 1.2 13.5 3.5 L30 3.5 Q31 3.5 31 5 L31 25.5 Q31 26 30 26 L2.5 26 Q1.2 26 1.2 24.5 Z" fill="#f4d66a" stroke="#2a2a2a" stroke-width="1.6"/><path d="M2 7.5 L30.5 7.5" stroke="#2a2a2a" stroke-width="1.3"/><path d="M2.2 8.2 L30.2 8.2 L30.2 12 L2.2 12 Z" fill="#fbe9a6"/><path d="M2.2 23 L30.2 23 L30.2 25.2 L2.2 25.2 Z" fill="#d9b64a"/></svg><div style="position:absolute;left:127.5px;top:829.78px;font-size:22px;line-height:22px;font-weight:400;color:#232323;letter-spacing:0.75px;word-spacing:1px;-webkit-text-stroke:0.32px #232323;white-space:nowrap;">Objects - Miscellaneous_Entourage</div><div style="position:absolute;left:20.5px;top:859px;width:636px;height:38px;background:#f4f4f4;border-top:1px solid #dcdcdc;border-bottom:1px solid #d6d6d6;box-sizing:border-box;"></div><svg style="position:absolute;left:35px;top:871px" width="18" height="15" viewBox="0 0 18 15" ><path d="M0 0 L18 0 L9.0 15 Z" fill="#7b7b7b"/></svg><svg style="position:absolute;left:56.0px;top:863.7px" width="28" height="28" viewBox="0 0 28 28" ><circle cx="14" cy="14" r="13.3" fill="#000"/><circle cx="14" cy="14" r="10.6" fill="none" stroke="#fff" stroke-width="1.2"/><path d="M9.7 10.3 L13.6 18.8" stroke="#fff" stroke-width="2.3" stroke-linecap="round"/><path d="M18.3 10.3 L16.3 14.3" stroke="#fff" stroke-width="2.3" stroke-linecap="round"/></svg><div style="position:absolute;left:94px;top:867.88px;font-size:22px;line-height:22px;font-weight:700;color:#232323;letter-spacing:0.75px;white-space:nowrap;">Vectorworks Libraries</div><svg style="position:absolute;left:69px;top:908px" width="14" height="17" viewBox="0 0 14 17" ><path d="M0 0 L14 8.5 L0 17 Z" fill="#7b7b7b"/></svg><svg style="position:absolute;left:88px;top:902.5px" width="32" height="27" viewBox="0 0 32 27" ><path d="M1.2 4.5 Q1.2 1.2 4 1.2 L11 1.2 Q13 1.2 13.5 3.5 L30 3.5 Q31 3.5 31 5 L31 25.5 Q31 26 30 26 L2.5 26 Q1.2 26 1.2 24.5 Z" fill="#f4d66a" stroke="#2a2a2a" stroke-width="1.6"/><path d="M2 7.5 L30.5 7.5" stroke="#2a2a2a" stroke-width="1.3"/><path d="M2.2 8.2 L30.2 8.2 L30.2 12 L2.2 12 Z" fill="#fbe9a6"/><path d="M2.2 23 L30.2 23 L30.2 25.2 L2.2 25.2 Z" fill="#d9b64a"/></svg><div style="position:absolute;left:127.5px;top:905.78px;font-size:22px;line-height:22px;font-weight:400;color:#232323;letter-spacing:0.75px;word-spacing:1px;-webkit-text-stroke:0.32px #232323;white-space:nowrap;">Defaults</div><svg style="position:absolute;left:69px;top:946px" width="14" height="17" viewBox="0 0 14 17" ><path d="M0 0 L14 8.5 L0 17 Z" fill="#7b7b7b"/></svg><svg style="position:absolute;left:88px;top:940.5px" width="32" height="27" viewBox="0 0 32 27" ><path d="M1.2 4.5 Q1.2 1.2 4 1.2 L11 1.2 Q13 1.2 13.5 3.5 L30 3.5 Q31 3.5 31 5 L31 25.5 Q31 26 30 26 L2.5 26 Q1.2 26 1.2 24.5 Z" fill="#f4d66a" stroke="#2a2a2a" stroke-width="1.6"/><path d="M2 7.5 L30.5 7.5" stroke="#2a2a2a" stroke-width="1.3"/><path d="M2.2 8.2 L30.2 8.2 L30.2 12 L2.2 12 Z" fill="#fbe9a6"/><path d="M2.2 23 L30.2 23 L30.2 25.2 L2.2 25.2 Z" fill="#d9b64a"/></svg><div style="position:absolute;left:127.5px;top:943.78px;font-size:22px;line-height:22px;font-weight:400;color:#232323;letter-spacing:0.75px;word-spacing:1px;-webkit-text-stroke:0.32px #232323;white-space:nowrap;">Object Styles</div><svg style="position:absolute;left:69px;top:984px" width="14" height="17" viewBox="0 0 14 17" ><path d="M0 0 L14 8.5 L0 17 Z" fill="#7b7b7b"/></svg><svg style="position:absolute;left:88px;top:978.5px" width="32" height="27" viewBox="0 0 32 27" ><path d="M1.2 4.5 Q1.2 1.2 4 1.2 L11 1.2 Q13 1.2 13.5 3.5 L30 3.5 Q31 3.5 31 5 L31 25.5 Q31 26 30 26 L2.5 26 Q1.2 26 1.2 24.5 Z" fill="#f4d66a" stroke="#2a2a2a" stroke-width="1.6"/><path d="M2 7.5 L30.5 7.5" stroke="#2a2a2a" stroke-width="1.3"/><path d="M2.2 8.2 L30.2 8.2 L30.2 12 L2.2 12 Z" fill="#fbe9a6"/><path d="M2.2 23 L30.2 23 L30.2 25.2 L2.2 25.2 Z" fill="#d9b64a"/></svg><div style="position:absolute;left:127.5px;top:981.78px;font-size:22px;line-height:22px;font-weight:400;color:#232323;letter-spacing:0.75px;word-spacing:1px;-webkit-text-stroke:0.32px #232323;white-space:nowrap;">Objects - Architecture</div><svg style="position:absolute;left:69px;top:1022px" width="14" height="17" viewBox="0 0 14 17" ><path d="M0 0 L14 8.5 L0 17 Z" fill="#7b7b7b"/></svg><svg style="position:absolute;left:88px;top:1016.5px" width="32" height="27" viewBox="0 0 32 27" ><path d="M1.2 4.5 Q1.2 1.2 4 1.2 L11 1.2 Q13 1.2 13.5 3.5 L30 3.5 Q31 3.5 31 5 L31 25.5 Q31 26 30 26 L2.5 26 Q1.2 26 1.2 24.5 Z" fill="#f4d66a" stroke="#2a2a2a" stroke-width="1.6"/><path d="M2 7.5 L30.5 7.5" stroke="#2a2a2a" stroke-width="1.3"/><path d="M2.2 8.2 L30.2 8.2 L30.2 12 L2.2 12 Z" fill="#fbe9a6"/><path d="M2.2 23 L30.2 23 L30.2 25.2 L2.2 25.2 Z" fill="#d9b64a"/></svg><div style="position:absolute;left:127.5px;top:1019.78px;font-size:22px;line-height:22px;font-weight:400;color:#232323;letter-spacing:0.75px;word-spacing:1px;-webkit-text-stroke:0.32px #232323;white-space:nowrap;">Objects - Building Equip_Appliances</div><svg style="position:absolute;left:69px;top:1060px" width="14" height="17" viewBox="0 0 14 17" ><path d="M0 0 L14 8.5 L0 17 Z" fill="#7b7b7b"/></svg><svg style="position:absolute;left:88px;top:1054.5px" width="32" height="27" viewBox="0 0 32 27" ><path d="M1.2 4.5 Q1.2 1.2 4 1.2 L11 1.2 Q13 1.2 13.5 3.5 L30 3.5 Q31 3.5 31 5 L31 25.5 Q31 26 30 26 L2.5 26 Q1.2 26 1.2 24.5 Z" fill="#f4d66a" stroke="#2a2a2a" stroke-width="1.6"/><path d="M2 7.5 L30.5 7.5" stroke="#2a2a2a" stroke-width="1.3"/><path d="M2.2 8.2 L30.2 8.2 L30.2 12 L2.2 12 Z" fill="#fbe9a6"/><path d="M2.2 23 L30.2 23 L30.2 25.2 L2.2 25.2 Z" fill="#d9b64a"/></svg><div style="position:absolute;left:127.5px;top:1057.78px;font-size:22px;line-height:22px;font-weight:400;color:#232323;letter-spacing:0.75px;word-spacing:1px;-webkit-text-stroke:0.32px #232323;white-space:nowrap;">Objects - Building Furnishings</div><svg style="position:absolute;left:69px;top:1098px" width="14" height="17" viewBox="0 0 14 17" ><path d="M0 0 L14 8.5 L0 17 Z" fill="#7b7b7b"/></svg><svg style="position:absolute;left:88px;top:1092.5px" width="32" height="27" viewBox="0 0 32 27" ><path d="M1.2 4.5 Q1.2 1.2 4 1.2 L11 1.2 Q13 1.2 13.5 3.5 L30 3.5 Q31 3.5 31 5 L31 25.5 Q31 26 30 26 L2.5 26 Q1.2 26 1.2 24.5 Z" fill="#f4d66a" stroke="#2a2a2a" stroke-width="1.6"/><path d="M2 7.5 L30.5 7.5" stroke="#2a2a2a" stroke-width="1.3"/><path d="M2.2 8.2 L30.2 8.2 L30.2 12 L2.2 12 Z" fill="#fbe9a6"/><path d="M2.2 23 L30.2 23 L30.2 25.2 L2.2 25.2 Z" fill="#d9b64a"/></svg><div style="position:absolute;left:127.5px;top:1095.78px;font-size:22px;line-height:22px;font-weight:400;color:#232323;letter-spacing:0.75px;word-spacing:1px;-webkit-text-stroke:0.32px #232323;white-space:nowrap;">Objects - Building Services</div><svg style="position:absolute;left:69px;top:1136px" width="14" height="17" viewBox="0 0 14 17" ><path d="M0 0 L14 8.5 L0 17 Z" fill="#7b7b7b"/></svg><svg style="position:absolute;left:88px;top:1130.5px" width="32" height="27" viewBox="0 0 32 27" ><path d="M1.2 4.5 Q1.2 1.2 4 1.2 L11 1.2 Q13 1.2 13.5 3.5 L30 3.5 Q31 3.5 31 5 L31 25.5 Q31 26 30 26 L2.5 26 Q1.2 26 1.2 24.5 Z" fill="#f4d66a" stroke="#2a2a2a" stroke-width="1.6"/><path d="M2 7.5 L30.5 7.5" stroke="#2a2a2a" stroke-width="1.3"/><path d="M2.2 8.2 L30.2 8.2 L30.2 12 L2.2 12 Z" fill="#fbe9a6"/><path d="M2.2 23 L30.2 23 L30.2 25.2 L2.2 25.2 Z" fill="#d9b64a"/></svg><div style="position:absolute;left:127.5px;top:1133.78px;font-size:22px;line-height:22px;font-weight:400;color:#232323;letter-spacing:0.75px;word-spacing:1px;-webkit-text-stroke:0.32px #232323;white-space:nowrap;">Objects - ConnectCAD</div><svg style="position:absolute;left:69px;top:1174px" width="14" height="17" viewBox="0 0 14 17" ><path d="M0 0 L14 8.5 L0 17 Z" fill="#7b7b7b"/></svg><svg style="position:absolute;left:88px;top:1168.5px" width="32" height="27" viewBox="0 0 32 27" ><path d="M1.2 4.5 Q1.2 1.2 4 1.2 L11 1.2 Q13 1.2 13.5 3.5 L30 3.5 Q31 3.5 31 5 L31 25.5 Q31 26 30 26 L2.5 26 Q1.2 26 1.2 24.5 Z" fill="#f4d66a" stroke="#2a2a2a" stroke-width="1.6"/><path d="M2 7.5 L30.5 7.5" stroke="#2a2a2a" stroke-width="1.3"/><path d="M2.2 8.2 L30.2 8.2 L30.2 12 L2.2 12 Z" fill="#fbe9a6"/><path d="M2.2 23 L30.2 23 L30.2 25.2 L2.2 25.2 Z" fill="#d9b64a"/></svg><div style="position:absolute;left:127.5px;top:1171.78px;font-size:22px;line-height:22px;font-weight:400;color:#232323;letter-spacing:0.75px;word-spacing:1px;-webkit-text-stroke:0.32px #232323;white-space:nowrap;">Objects - Ent Lighting Instruments</div><svg style="position:absolute;left:69px;top:1212px" width="14" height="17" viewBox="0 0 14 17" ><path d="M0 0 L14 8.5 L0 17 Z" fill="#7b7b7b"/></svg><svg style="position:absolute;left:88px;top:1206.5px" width="32" height="27" viewBox="0 0 32 27" ><path d="M1.2 4.5 Q1.2 1.2 4 1.2 L11 1.2 Q13 1.2 13.5 3.5 L30 3.5 Q31 3.5 31 5 L31 25.5 Q31 26 30 26 L2.5 26 Q1.2 26 1.2 24.5 Z" fill="#f4d66a" stroke="#2a2a2a" stroke-width="1.6"/><path d="M2 7.5 L30.5 7.5" stroke="#2a2a2a" stroke-width="1.3"/><path d="M2.2 8.2 L30.2 8.2 L30.2 12 L2.2 12 Z" fill="#fbe9a6"/><path d="M2.2 23 L30.2 23 L30.2 25.2 L2.2 25.2 Z" fill="#d9b64a"/></svg><div style="position:absolute;left:127.5px;top:1209.78px;font-size:22px;line-height:22px;font-weight:400;color:#232323;letter-spacing:0.75px;word-spacing:1px;-webkit-text-stroke:0.32px #232323;white-space:nowrap;">Objects - Landscape Furnishings</div><svg style="position:absolute;left:69px;top:1250px" width="14" height="17" viewBox="0 0 14 17" ><path d="M0 0 L14 8.5 L0 17 Z" fill="#7b7b7b"/></svg><svg style="position:absolute;left:88px;top:1244.5px" width="32" height="27" viewBox="0 0 32 27" ><path d="M1.2 4.5 Q1.2 1.2 4 1.2 L11 1.2 Q13 1.2 13.5 3.5 L30 3.5 Q31 3.5 31 5 L31 25.5 Q31 26 30 26 L2.5 26 Q1.2 26 1.2 24.5 Z" fill="#f4d66a" stroke="#2a2a2a" stroke-width="1.6"/><path d="M2 7.5 L30.5 7.5" stroke="#2a2a2a" stroke-width="1.3"/><path d="M2.2 8.2 L30.2 8.2 L30.2 12 L2.2 12 Z" fill="#fbe9a6"/><path d="M2.2 23 L30.2 23 L30.2 25.2 L2.2 25.2 Z" fill="#d9b64a"/></svg><div style="position:absolute;left:127.5px;top:1247.78px;font-size:22px;line-height:22px;font-weight:400;color:#232323;letter-spacing:0.75px;word-spacing:1px;-webkit-text-stroke:0.32px #232323;white-space:nowrap;">Objects - Landscape Plants</div><svg style="position:absolute;left:69px;top:1288px" width="14" height="17" viewBox="0 0 14 17" ><path d="M0 0 L14 8.5 L0 17 Z" fill="#7b7b7b"/></svg><svg style="position:absolute;left:88px;top:1282.5px" width="32" height="27" viewBox="0 0 32 27" ><path d="M1.2 4.5 Q1.2 1.2 4 1.2 L11 1.2 Q13 1.2 13.5 3.5 L30 3.5 Q31 3.5 31 5 L31 25.5 Q31 26 30 26 L2.5 26 Q1.2 26 1.2 24.5 Z" fill="#f4d66a" stroke="#2a2a2a" stroke-width="1.6"/><path d="M2 7.5 L30.5 7.5" stroke="#2a2a2a" stroke-width="1.3"/><path d="M2.2 8.2 L30.2 8.2 L30.2 12 L2.2 12 Z" fill="#fbe9a6"/><path d="M2.2 23 L30.2 23 L30.2 25.2 L2.2 25.2 Z" fill="#d9b64a"/></svg><div style="position:absolute;left:127.5px;top:1285.78px;font-size:22px;line-height:22px;font-weight:400;color:#232323;letter-spacing:0.75px;word-spacing:1px;-webkit-text-stroke:0.32px #232323;white-space:nowrap;">Objects - Landscape Site</div><svg style="position:absolute;left:69px;top:1326px" width="14" height="17" viewBox="0 0 14 17" ><path d="M0 0 L14 8.5 L0 17 Z" fill="#7b7b7b"/></svg><svg style="position:absolute;left:88px;top:1320.5px" width="32" height="27" viewBox="0 0 32 27" ><path d="M1.2 4.5 Q1.2 1.2 4 1.2 L11 1.2 Q13 1.2 13.5 3.5 L30 3.5 Q31 3.5 31 5 L31 25.5 Q31 26 30 26 L2.5 26 Q1.2 26 1.2 24.5 Z" fill="#f4d66a" stroke="#2a2a2a" stroke-width="1.6"/><path d="M2 7.5 L30.5 7.5" stroke="#2a2a2a" stroke-width="1.3"/><path d="M2.2 8.2 L30.2 8.2 L30.2 12 L2.2 12 Z" fill="#fbe9a6"/><path d="M2.2 23 L30.2 23 L30.2 25.2 L2.2 25.2 Z" fill="#d9b64a"/></svg><div style="position:absolute;left:127.5px;top:1323.78px;font-size:22px;line-height:22px;font-weight:400;color:#232323;letter-spacing:0.75px;word-spacing:1px;-webkit-text-stroke:0.32px #232323;white-space:nowrap;">Objects - Miscellaneous_Entourage</div><svg style="position:absolute;left:69px;top:1364px" width="14" height="17" viewBox="0 0 14 17" ><path d="M0 0 L14 8.5 L0 17 Z" fill="#7b7b7b"/></svg><svg style="position:absolute;left:88px;top:1358.5px" width="32" height="27" viewBox="0 0 32 27" ><path d="M1.2 4.5 Q1.2 1.2 4 1.2 L11 1.2 Q13 1.2 13.5 3.5 L30 3.5 Q31 3.5 31 5 L31 25.5 Q31 26 30 26 L2.5 26 Q1.2 26 1.2 24.5 Z" fill="#f4d66a" stroke="#2a2a2a" stroke-width="1.6"/><path d="M2 7.5 L30.5 7.5" stroke="#2a2a2a" stroke-width="1.3"/><path d="M2.2 8.2 L30.2 8.2 L30.2 12 L2.2 12 Z" fill="#fbe9a6"/><path d="M2.2 23 L30.2 23 L30.2 25.2 L2.2 25.2 Z" fill="#d9b64a"/></svg><div style="position:absolute;left:127.5px;top:1361.78px;font-size:22px;line-height:22px;font-weight:400;color:#232323;letter-spacing:0.75px;word-spacing:1px;-webkit-text-stroke:0.32px #232323;white-space:nowrap;">Renderworks Cameras</div><div style="position:absolute;left:20.5px;top:1391px;width:636px;height:38px;background:#f4f4f4;border-top:1px solid #dcdcdc;border-bottom:1px solid #d6d6d6;box-sizing:border-box;"></div><svg style="position:absolute;left:35px;top:1403px" width="18" height="15" viewBox="0 0 18 15" ><path d="M0 0 L18 0 L9.0 15 Z" fill="#7b7b7b"/></svg><svg style="position:absolute;left:60px;top:1397.5px" width="18" height="25" viewBox="0 0 18 26" ><rect x="4.5" y="1" width="9" height="10.5" rx="3" fill="#cfcfcf" stroke="#111" stroke-width="1.5"/><rect x="1" y="11.5" width="16" height="13.5" rx="1.5" fill="#8c8c8c" stroke="#111" stroke-width="1.5"/><rect x="5" y="14" width="8" height="9" fill="#a9a9a9"/></svg><div style="position:absolute;left:94px;top:1399.88px;font-size:22px;line-height:22px;font-weight:700;color:#232323;letter-spacing:0.75px;white-space:nowrap;">User Libraries</div><svg style="position:absolute;left:69px;top:1440px" width="14" height="17" viewBox="0 0 14 17" ><path d="M0 0 L14 8.5 L0 17 Z" fill="#7b7b7b"/></svg><svg style="position:absolute;left:88px;top:1434.5px" width="32" height="27" viewBox="0 0 32 27" ><path d="M1.2 4.5 Q1.2 1.2 4 1.2 L11 1.2 Q13 1.2 13.5 3.5 L30 3.5 Q31 3.5 31 5 L31 25.5 Q31 26 30 26 L2.5 26 Q1.2 26 1.2 24.5 Z" fill="#f4d66a" stroke="#2a2a2a" stroke-width="1.6"/><path d="M2 7.5 L30.5 7.5" stroke="#2a2a2a" stroke-width="1.3"/><path d="M2.2 8.2 L30.2 8.2 L30.2 12 L2.2 12 Z" fill="#fbe9a6"/><path d="M2.2 23 L30.2 23 L30.2 25.2 L2.2 25.2 Z" fill="#d9b64a"/></svg><div style="position:absolute;left:127.5px;top:1437.78px;font-size:22px;line-height:22px;font-weight:400;color:#232323;letter-spacing:0.75px;word-spacing:1px;-webkit-text-stroke:0.32px #232323;white-space:nowrap;">Defaults</div><div style="position:absolute;left:20.5px;top:1467px;width:636px;height:38px;background:#f4f4f4;border-top:1px solid #dcdcdc;border-bottom:1px solid #d6d6d6;box-sizing:border-box;"></div><svg style="position:absolute;left:53.5px;top:1473.5px" width="31" height="24" viewBox="0 0 31 25" ><path d="M2 23.5 L2 14 Q2 12 4 12 L8 12" fill="none" stroke="#111" stroke-width="1.5"/><rect x="1.2" y="12.5" width="7" height="11.5" fill="#d8d8d8" stroke="#111" stroke-width="1.4"/><rect x="22.8" y="12.5" width="7" height="11.5" fill="#9a9a9a" stroke="#111" stroke-width="1.4"/><path d="M5 9 L5 5 Q5 3.5 6.5 3.5 L8.5 3.5 M26 9 L26 5 Q26 3.5 24.5 3.5 L22.5 3.5" fill="none" stroke="#111" stroke-width="1.4"/><rect x="11.5" y="1" width="8" height="9.5" rx="2.5" fill="#c9c9c9" stroke="#111" stroke-width="1.5"/><rect x="8" y="10.5" width="15" height="14" rx="1" fill="#8a8a8a" stroke="#111" stroke-width="1.5"/><rect x="11" y="13" width="9" height="9.5" fill="#a6a6a6"/></svg><div style="position:absolute;left:94px;top:1475.88px;font-size:22px;line-height:22px;font-weight:700;color:#232323;letter-spacing:0.75px;white-space:nowrap;">Workgroup Libraries</div><div style="position:absolute;left:662px;top:942px;width:4px;height:4px;background:#8e8e8e;"></div><div style="position:absolute;left:662px;top:952px;width:4px;height:4px;background:#8e8e8e;"></div><div style="position:absolute;left:662px;top:962px;width:4px;height:4px;background:#8e8e8e;"></div><div style="position:absolute;left:670.5px;top:98.5px;width:1433px;height:1690.5px;background:#fff;border:2px solid #c6c6c6;border-right-width:1px;border-bottom-width:1px;box-sizing:border-box;"></div><div style="position:absolute;left:672.5px;top:137px;width:1430px;height:1.5px;background:#cdcdcd;"></div><svg style="position:absolute;left:684.0px;top:105.8px" width="28" height="28" viewBox="0 0 28 28" ><circle cx="14" cy="14" r="13.3" fill="#000"/><circle cx="14" cy="14" r="10.6" fill="none" stroke="#fff" stroke-width="1.2"/><path d="M9.7 10.3 L13.6 18.8" stroke="#fff" stroke-width="2.3" stroke-linecap="round"/><path d="M18.3 10.3 L16.3 14.3" stroke="#fff" stroke-width="2.3" stroke-linecap="round"/></svg><div style="position:absolute;left:720.9px;top:109.58px;font-size:22px;line-height:22px;font-weight:400;color:#7e7e7e;letter-spacing:0.2px;-webkit-text-stroke:0.32px #7e7e7e;white-space:nowrap;">Open Files</div><svg style="position:absolute;left:840px;top:112px" width="10" height="16" viewBox="0 0 10 16" ><path d="M2 2 L8 8 L2 14" fill="none" stroke="#808080" stroke-width="2"/></svg><svg style="position:absolute;left:864px;top:106px" width="24" height="28" viewBox="0 0 24 28" ><path d="M1 1 L17 1 L23 7 L23 27 L1 27 Z" fill="#545454" stroke="#2e2e2e" stroke-width="1.2"/><path d="M17 1 L17 7 L23 7" fill="#8a8a8a" stroke="#2e2e2e" stroke-width="1"/><circle cx="12" cy="16" r="7.3" fill="none" stroke="#cfcfcf" stroke-width="1.6"/><path d="M9 12.5 L11.6 19.5 M15.2 12.5 L13.8 16" stroke="#cfcfcf" stroke-width="1.8" stroke-linecap="round"/></svg><div style="position:absolute;left:899px;top:109.58px;font-size:22px;line-height:22px;font-weight:400;color:#7e7e7e;letter-spacing:0.28px;-webkit-text-stroke:0.32px #7e7e7e;white-space:nowrap;">Base BIM Floor Plan.vwx</div><div style="position:absolute;left:672.5px;top:138.5px;width:1430px;height:1649.5px;overflow:hidden;"><div style="position:absolute;left:7.5px;top:-60.5px;width:128px;height:128px;background:#707070;"></div><div style="position:absolute;left:143.29999999999995px;top:6.68px;font-size:22px;line-height:22px;font-weight:400;color:#0a0a0a;letter-spacing:0.55px;word-spacing:1px;-webkit-text-stroke:0.32px #0a0a0a;white-space:nowrap;">DoorKickPlate</div><div style="position:absolute;left:407.5px;top:-60.5px;width:128px;height:128px;background:#a69d8a;"></div><svg style="position:absolute;left:407.5px;top:-60.5px;overflow:hidden;mix-blend-mode:overlay" width="128" height="128"><filter id="nf01" filterUnits="userSpaceOnUse" x="0" y="0" width="128" height="128" color-interpolation-filters="sRGB"><feTurbulence type="fractalNoise" baseFrequency="0.6" numOctaves="3" seed="1"/><feColorMatrix values="0.18 0 0 0 0.41000000000000003  0.18 0 0 0 0.41000000000000003  0.18 0 0 0 0.41000000000000003  0 0 0 0 1"/></filter><rect width="128" height="128" filter="url(#nf01)"/></svg><svg style="position:absolute;left:407.5px;top:-60.5px;overflow:hidden" width="128" height="128"><rect x="41.5" y="0" width="1.5" height="128" fill="#958b78" opacity="0.7"/><rect x="19.3" y="0" width="1.3" height="128" fill="#958b78" opacity="0.7"/><rect x="83.3" y="0" width="1.9" height="128" fill="#8f8674" opacity="0.7"/><rect x="9.3" y="0" width="1.6" height="128" fill="#958b78" opacity="0.7"/><rect x="68.6" y="0" width="2.1" height="128" fill="#958b78" opacity="0.7"/><rect x="46.8" y="0" width="1.1" height="128" fill="#8f8674" opacity="0.7"/><rect x="7.4" y="0" width="1.7" height="128" fill="#958b78" opacity="0.7"/><rect x="65.0" y="0" width="1.6" height="128" fill="#bdb4a2" opacity="0.7"/><rect x="4.8" y="0" width="1.7" height="128" fill="#bdb4a2" opacity="0.7"/><rect x="55.5" y="0" width="1.5" height="128" fill="#8f8674" opacity="0.7"/><rect x="8.9" y="0" width="2.2" height="128" fill="#958b78" opacity="0.7"/><rect x="11.6" y="0" width="2.2" height="128" fill="#8f8674" opacity="0.7"/><rect x="54.3" y="0" width="1.9" height="128" fill="#958b78" opacity="0.7"/><rect x="105.8" y="0" width="1.7" height="128" fill="#bdb4a2" opacity="0.7"/><rect x="15.8" y="0" width="2.1" height="128" fill="#bdb4a2" opacity="0.7"/><rect x="28.6" y="0" width="1.9" height="128" fill="#8f8674" opacity="0.7"/><rect x="80.3" y="0" width="1.2" height="128" fill="#bdb4a2" opacity="0.7"/><rect x="121.3" y="0" width="1.2" height="128" fill="#bdb4a2" opacity="0.7"/><rect x="73.9" y="0" width="1.2" height="128" fill="#bdb4a2" opacity="0.7"/><rect x="50.8" y="0" width="1.6" height="128" fill="#958b78" opacity="0.7"/><rect x="125.0" y="0" width="1.1" height="128" fill="#958b78" opacity="0.7"/><rect x="6.0" y="0" width="1.9" height="128" fill="#bdb4a2" opacity="0.7"/><rect x="109.9" y="0" width="1.5" height="128" fill="#bdb4a2" opacity="0.7"/><rect x="37.1" y="0" width="1.9" height="128" fill="#958b78" opacity="0.7"/><rect x="18.5" y="0" width="2.2" height="128" fill="#8f8674" opacity="0.7"/><rect x="15.1" y="0" width="2.3" height="128" fill="#bdb4a2" opacity="0.7"/></svg><div style="position:absolute;left:543.3px;top:6.68px;font-size:22px;line-height:22px;font-weight:400;color:#0a0a0a;letter-spacing:0.55px;word-spacing:1px;-webkit-text-stroke:0.32px #0a0a0a;white-space:nowrap;">cladding</div><div style="position:absolute;left:807.5px;top:-60.5px;width:128px;height:128px;background:#d4d4d4;"></div><div style="position:absolute;left:943.3px;top:6.68px;font-size:22px;line-height:22px;font-weight:400;color:#0a0a0a;letter-spacing:0.55px;word-spacing:1px;-webkit-text-stroke:0.32px #0a0a0a;white-space:nowrap;">RT</div><div style="position:absolute;left:7.5px;top:83.5px;width:128px;height:128px;background:#6b6b6b;"></div><svg style="position:absolute;left:7.5px;top:83.5px;overflow:hidden;mix-blend-mode:overlay" width="128" height="128"><filter id="nf10" filterUnits="userSpaceOnUse" x="0" y="0" width="128" height="128" color-interpolation-filters="sRGB"><feTurbulence type="fractalNoise" baseFrequency="0.3" numOctaves="3" seed="3"/><feColorMatrix values="0.30000000000000004 0 0 0 0.35  0.30000000000000004 0 0 0 0.35  0.30000000000000004 0 0 0 0.35  0 0 0 0 1"/></filter><rect width="128" height="128" filter="url(#nf10)"/></svg><div style="position:absolute;left:143.29999999999995px;top:136.68px;font-size:22px;line-height:22px;font-weight:400;color:#0a0a0a;letter-spacing:0.55px;word-spacing:1px;-webkit-text-stroke:0.32px #0a0a0a;white-space:nowrap;">Asphalt Small RT</div><div style="position:absolute;left:407.5px;top:83.5px;width:128px;height:128px;background:#e6a48d;"></div><svg style="position:absolute;left:407.5px;top:83.5px;overflow:hidden" width="128" height="128"><defs><linearGradient id="bg1" x1="0" y1="0" x2="0" y2="1"><stop offset="0" stop-color="#e8aa92"/><stop offset="1" stop-color="#d5a08e"/></linearGradient></defs><rect width="128" height="128" fill="url(#bg1)"/><rect x="0" y="19.6" width="128" height="1.5" fill="#efc6b8" opacity="0.85"/><rect x="0" y="41.2" width="128" height="1.5" fill="#efc6b8" opacity="0.85"/><rect x="0" y="62.8" width="128" height="1.5" fill="#efc6b8" opacity="0.85"/><rect x="0" y="84.4" width="128" height="1.5" fill="#efc6b8" opacity="0.85"/><rect x="0" y="106.0" width="128" height="1.5" fill="#efc6b8" opacity="0.85"/><rect x="0" y="127.6" width="128" height="1.5" fill="#efc6b8" opacity="0.85"/><rect x="63.6" y="-1.3" width="1.5" height="21.6" fill="#efc6b8" opacity="0.85"/><rect x="30.6" y="20.3" width="1.5" height="21.6" fill="#efc6b8" opacity="0.85"/><rect x="96.1" y="20.3" width="1.5" height="21.6" fill="#efc6b8" opacity="0.85"/><rect x="63.6" y="41.9" width="1.5" height="21.6" fill="#efc6b8" opacity="0.85"/><rect x="30.6" y="63.5" width="1.5" height="21.6" fill="#efc6b8" opacity="0.85"/><rect x="96.1" y="63.5" width="1.5" height="21.6" fill="#efc6b8" opacity="0.85"/><rect x="63.6" y="85.1" width="1.5" height="21.6" fill="#efc6b8" opacity="0.85"/><rect x="30.6" y="106.7" width="1.5" height="21.6" fill="#efc6b8" opacity="0.85"/><rect x="96.1" y="106.7" width="1.5" height="21.6" fill="#efc6b8" opacity="0.85"/><rect x="63.6" y="128.3" width="1.5" height="21.6" fill="#efc6b8" opacity="0.85"/></svg><svg style="position:absolute;left:407.5px;top:83.5px;overflow:hidden;mix-blend-mode:overlay" width="128" height="128"><filter id="nfb" filterUnits="userSpaceOnUse" x="0" y="0" width="128" height="128" color-interpolation-filters="sRGB"><feTurbulence type="fractalNoise" baseFrequency="0.5" numOctaves="2" seed="9"/><feColorMatrix values="0.25 0 0 0 0.375  0.25 0 0 0 0.375  0.25 0 0 0 0.375  0 0 0 0 1"/></filter><rect width="128" height="128" filter="url(#nfb)"/></svg><div style="position:absolute;left:543.3px;top:136.68px;font-size:22px;line-height:22px;font-weight:400;color:#0a0a0a;letter-spacing:0.25px;word-spacing:1px;-webkit-text-stroke:0.32px #0a0a0a;white-space:nowrap;">Brick_Red_Run_Bond</div><div style="position:absolute;left:807.5px;top:83.5px;width:128px;height:128px;background:#bdbdbd;"></div><svg style="position:absolute;left:807.5px;top:83.5px;overflow:hidden;mix-blend-mode:overlay" width="128" height="128"><filter id="nf12" filterUnits="userSpaceOnUse" x="0" y="0" width="128" height="128" color-interpolation-filters="sRGB"><feTurbulence type="fractalNoise" baseFrequency="0.05" numOctaves="3" seed="5"/><feColorMatrix values="0.07500000000000001 0 0 0 0.4625  0.07500000000000001 0 0 0 0.4625  0.07500000000000001 0 0 0 0.4625  0 0 0 0 1"/></filter><rect width="128" height="128" filter="url(#nf12)"/></svg><div style="position:absolute;left:943.3px;top:136.68px;font-size:22px;line-height:22px;font-weight:400;color:#0a0a0a;letter-spacing:0.55px;word-spacing:1px;-webkit-text-stroke:0.32px #0a0a0a;white-space:nowrap;">Ceiling Plaster Lt RT</div><div style="position:absolute;left:7.5px;top:227.5px;width:128px;height:128px;background:#9a62a5;"></div><svg style="position:absolute;left:7.5px;top:227.5px;overflow:hidden;mix-blend-mode:overlay" width="128" height="128"><filter id="nf20" filterUnits="userSpaceOnUse" x="0" y="0" width="128" height="128" color-interpolation-filters="sRGB"><feTurbulence type="fractalNoise" baseFrequency="0.22" numOctaves="3" seed="6"/><feColorMatrix values="0.375 0 0 0 0.3125  0.375 0 0 0 0.3125  0.375 0 0 0 0.3125  0 0 0 0 1"/></filter><rect width="128" height="128" filter="url(#nf20)"/></svg><div style="position:absolute;left:143.29999999999995px;top:266.68px;font-size:22px;line-height:22px;font-weight:400;color:#0a0a0a;letter-spacing:0.55px;word-spacing:1px;-webkit-text-stroke:0.32px #0a0a0a;white-space:nowrap;">Cloth Purple Polyester</div><div style="position:absolute;left:143.29999999999995px;top:294.68px;font-size:22px;line-height:22px;font-weight:400;color:#0a0a0a;letter-spacing:0.55px;word-spacing:1px;-webkit-text-stroke:0.32px #0a0a0a;white-space:nowrap;">Lining RT</div><div style="position:absolute;left:407.5px;top:227.5px;width:128px;height:128px;background:#e4e4e4;"></div><div style="position:absolute;left:543.3px;top:280.68px;font-size:22px;line-height:22px;font-weight:400;color:#0a0a0a;letter-spacing:0.55px;word-spacing:1px;-webkit-text-stroke:0.32px #0a0a0a;white-space:nowrap;">Color Attribute RT</div><div style="position:absolute;left:807.5px;top:227.5px;width:128px;height:128px;background:#8b8b8b;"></div><div style="position:absolute;left:943.3px;top:266.68px;font-size:22px;line-height:22px;font-weight:400;color:#0a0a0a;letter-spacing:0.55px;word-spacing:1px;-webkit-text-stroke:0.32px #0a0a0a;white-space:nowrap;">Component Enameled</div><div style="position:absolute;left:943.3px;top:294.68px;font-size:22px;line-height:22px;font-weight:400;color:#0a0a0a;letter-spacing:0.55px;word-spacing:1px;-webkit-text-stroke:0.32px #0a0a0a;white-space:nowrap;">Aluminum RT</div><div style="position:absolute;left:7.5px;top:371.5px;width:128px;height:128px;background:#93704f;"></div><svg style="position:absolute;left:7.5px;top:371.5px;overflow:hidden;mix-blend-mode:overlay" width="128" height="128"><filter id="nf30" filterUnits="userSpaceOnUse" x="0" y="0" width="128" height="128" color-interpolation-filters="sRGB"><feTurbulence type="fractalNoise" baseFrequency="0.5" numOctaves="3" seed="9"/><feColorMatrix values="0.30000000000000004 0 0 0 0.35  0.30000000000000004 0 0 0 0.35  0.30000000000000004 0 0 0 0.35  0 0 0 0 1"/></filter><rect width="128" height="128" filter="url(#nf30)"/></svg><svg style="position:absolute;left:7.5px;top:371.5px;overflow:hidden" width="128" height="128"><ellipse cx="79.7" cy="94.9" rx="1.9" ry="1.4" fill="#3a2614" opacity="0.8"/><ellipse cx="94.7" cy="118.1" rx="0.8" ry="1.0" fill="#3a2614" opacity="0.8"/><ellipse cx="120.7" cy="83.1" rx="2.1" ry="0.7" fill="#3a2614" opacity="0.8"/><ellipse cx="60.0" cy="31.6" rx="1.6" ry="1.1" fill="#3a2614" opacity="0.8"/><ellipse cx="1.7" cy="27.7" rx="1.2" ry="1.3" fill="#3a2614" opacity="0.8"/><ellipse cx="98.0" cy="20.4" rx="1.9" ry="0.7" fill="#3a2614" opacity="0.8"/><ellipse cx="79.0" cy="16.2" rx="0.8" ry="1.3" fill="#3a2614" opacity="0.8"/><ellipse cx="26.8" cy="27.6" rx="2.2" ry="1.3" fill="#3a2614" opacity="0.8"/><ellipse cx="37.0" cy="123.1" rx="1.6" ry="1.1" fill="#3a2614" opacity="0.8"/><ellipse cx="26.2" cy="120.4" rx="1.8" ry="1.4" fill="#3a2614" opacity="0.8"/><ellipse cx="114.4" cy="38.2" rx="1.3" ry="0.7" fill="#3a2614" opacity="0.8"/><ellipse cx="18.6" cy="8.3" rx="1.2" ry="1.1" fill="#3a2614" opacity="0.8"/><ellipse cx="0.4" cy="86.8" rx="1.3" ry="0.8" fill="#3a2614" opacity="0.8"/><ellipse cx="104.8" cy="61.5" rx="1.2" ry="1.0" fill="#3a2614" opacity="0.8"/><ellipse cx="90.2" cy="7.3" rx="2.2" ry="0.6" fill="#3a2614" opacity="0.8"/><ellipse cx="96.0" cy="108.1" rx="0.8" ry="1.2" fill="#3a2614" opacity="0.8"/><ellipse cx="46.9" cy="74.1" rx="0.8" ry="0.6" fill="#3a2614" opacity="0.8"/><ellipse cx="23.2" cy="122.3" rx="1.1" ry="1.2" fill="#3a2614" opacity="0.8"/><ellipse cx="119.0" cy="120.6" rx="1.3" ry="0.9" fill="#3a2614" opacity="0.8"/><ellipse cx="67.2" cy="99.3" rx="1.0" ry="1.2" fill="#3a2614" opacity="0.8"/><ellipse cx="102.0" cy="110.0" rx="0.9" ry="1.4" fill="#3a2614" opacity="0.8"/><ellipse cx="11.7" cy="43.6" rx="1.7" ry="1.3" fill="#3a2614" opacity="0.8"/><ellipse cx="43.5" cy="118.3" rx="1.6" ry="0.8" fill="#3a2614" opacity="0.8"/><ellipse cx="40.6" cy="22.7" rx="0.9" ry="0.7" fill="#3a2614" opacity="0.8"/><ellipse cx="88.2" cy="127.6" rx="1.0" ry="0.6" fill="#3a2614" opacity="0.8"/><ellipse cx="126.3" cy="68.3" rx="1.4" ry="0.8" fill="#3a2614" opacity="0.8"/><ellipse cx="76.0" cy="105.8" rx="1.4" ry="0.9" fill="#3a2614" opacity="0.8"/><ellipse cx="7.1" cy="117.3" rx="0.8" ry="1.0" fill="#3a2614" opacity="0.8"/><ellipse cx="107.3" cy="16.7" rx="1.8" ry="1.4" fill="#3a2614" opacity="0.8"/><ellipse cx="80.7" cy="100.9" rx="0.9" ry="0.9" fill="#3a2614" opacity="0.8"/><ellipse cx="19.1" cy="108.1" rx="1.2" ry="1.0" fill="#3a2614" opacity="0.8"/><ellipse cx="127.9" cy="109.1" rx="2.2" ry="1.0" fill="#3a2614" opacity="0.8"/><ellipse cx="62.5" cy="93.4" rx="1.5" ry="0.8" fill="#3a2614" opacity="0.8"/><ellipse cx="51.7" cy="18.8" rx="1.3" ry="1.4" fill="#3a2614" opacity="0.8"/><ellipse cx="122.9" cy="80.3" rx="1.5" ry="0.9" fill="#3a2614" opacity="0.8"/><ellipse cx="11.4" cy="34.9" rx="1.9" ry="1.3" fill="#3a2614" opacity="0.8"/><ellipse cx="46.2" cy="100.6" rx="1.9" ry="1.2" fill="#3a2614" opacity="0.8"/><ellipse cx="85.0" cy="97.2" rx="1.3" ry="1.2" fill="#3a2614" opacity="0.8"/><ellipse cx="35.9" cy="62.2" rx="1.9" ry="1.2" fill="#3a2614" opacity="0.8"/><ellipse cx="37.6" cy="121.0" rx="1.7" ry="1.1" fill="#3a2614" opacity="0.8"/><ellipse cx="1.5" cy="70.0" rx="1.2" ry="1.1" fill="#3a2614" opacity="0.8"/><ellipse cx="59.3" cy="104.5" rx="1.7" ry="1.2" fill="#3a2614" opacity="0.8"/><ellipse cx="44.5" cy="82.4" rx="1.8" ry="1.3" fill="#3a2614" opacity="0.8"/><ellipse cx="44.8" cy="107.9" rx="2.0" ry="1.2" fill="#3a2614" opacity="0.8"/><ellipse cx="124.9" cy="122.4" rx="1.5" ry="1.0" fill="#3a2614" opacity="0.8"/><ellipse cx="21.3" cy="107.1" rx="2.1" ry="1.0" fill="#3a2614" opacity="0.8"/><ellipse cx="88.5" cy="92.1" rx="1.8" ry="0.7" fill="#3a2614" opacity="0.8"/><ellipse cx="99.9" cy="74.3" rx="1.7" ry="0.9" fill="#3a2614" opacity="0.8"/><ellipse cx="79.8" cy="99.2" rx="1.7" ry="1.2" fill="#3a2614" opacity="0.8"/><ellipse cx="3.5" cy="20.5" rx="1.4" ry="1.1" fill="#3a2614" opacity="0.8"/><ellipse cx="28.0" cy="87.8" rx="1.7" ry="0.6" fill="#3a2614" opacity="0.8"/><ellipse cx="60.4" cy="29.0" rx="0.9" ry="0.7" fill="#3a2614" opacity="0.8"/><ellipse cx="40.6" cy="23.2" rx="1.1" ry="0.6" fill="#3a2614" opacity="0.8"/><ellipse cx="59.6" cy="48.7" rx="1.7" ry="1.1" fill="#3a2614" opacity="0.8"/><ellipse cx="30.4" cy="115.6" rx="0.8" ry="0.9" fill="#3a2614" opacity="0.8"/><ellipse cx="35.7" cy="52.5" rx="1.0" ry="1.3" fill="#3a2614" opacity="0.8"/><ellipse cx="47.9" cy="4.6" rx="1.7" ry="0.7" fill="#3a2614" opacity="0.8"/><ellipse cx="69.8" cy="43.4" rx="1.6" ry="1.4" fill="#3a2614" opacity="0.8"/><ellipse cx="104.8" cy="53.6" rx="1.9" ry="1.1" fill="#3a2614" opacity="0.8"/><ellipse cx="47.3" cy="18.2" rx="1.6" ry="1.1" fill="#3a2614" opacity="0.8"/><ellipse cx="122.5" cy="123.9" rx="1.7" ry="0.9" fill="#3a2614" opacity="0.8"/><ellipse cx="114.4" cy="0.1" rx="1.0" ry="1.1" fill="#3a2614" opacity="0.8"/><ellipse cx="78.7" cy="18.0" rx="1.7" ry="1.3" fill="#3a2614" opacity="0.8"/><ellipse cx="48.1" cy="55.3" rx="1.1" ry="0.8" fill="#3a2614" opacity="0.8"/><ellipse cx="124.5" cy="48.6" rx="2.1" ry="1.3" fill="#3a2614" opacity="0.8"/><ellipse cx="76.3" cy="33.3" rx="2.2" ry="1.0" fill="#3a2614" opacity="0.8"/><ellipse cx="53.2" cy="40.9" rx="2.2" ry="1.0" fill="#3a2614" opacity="0.8"/><ellipse cx="36.7" cy="61.0" rx="1.0" ry="1.1" fill="#3a2614" opacity="0.8"/><ellipse cx="56.8" cy="37.5" rx="1.9" ry="1.3" fill="#3a2614" opacity="0.8"/><ellipse cx="1.7" cy="68.2" rx="1.2" ry="1.3" fill="#3a2614" opacity="0.8"/><ellipse cx="100.1" cy="31.4" rx="1.2" ry="0.7" fill="#3a2614" opacity="0.8"/><ellipse cx="126.6" cy="37.5" rx="1.7" ry="1.0" fill="#3a2614" opacity="0.8"/><ellipse cx="82.5" cy="77.3" rx="1.8" ry="0.7" fill="#3a2614" opacity="0.8"/><ellipse cx="97.3" cy="38.5" rx="1.5" ry="0.9" fill="#3a2614" opacity="0.8"/><ellipse cx="38.0" cy="67.8" rx="1.5" ry="0.9" fill="#3a2614" opacity="0.8"/><ellipse cx="95.4" cy="75.6" rx="0.9" ry="0.8" fill="#3a2614" opacity="0.8"/><ellipse cx="58.3" cy="117.3" rx="2.0" ry="1.0" fill="#3a2614" opacity="0.8"/><ellipse cx="1.9" cy="99.6" rx="1.4" ry="1.1" fill="#3a2614" opacity="0.8"/><ellipse cx="90.6" cy="80.9" rx="1.5" ry="1.3" fill="#3a2614" opacity="0.8"/><ellipse cx="49.3" cy="50.2" rx="2.0" ry="0.8" fill="#3a2614" opacity="0.8"/><ellipse cx="37.9" cy="106.2" rx="0.9" ry="1.3" fill="#3a2614" opacity="0.8"/><ellipse cx="88.9" cy="55.4" rx="1.2" ry="1.2" fill="#3a2614" opacity="0.8"/><ellipse cx="116.6" cy="18.3" rx="1.5" ry="1.0" fill="#3a2614" opacity="0.8"/><ellipse cx="63.7" cy="42.3" rx="1.0" ry="1.1" fill="#3a2614" opacity="0.8"/><ellipse cx="103.9" cy="8.8" rx="1.1" ry="1.3" fill="#3a2614" opacity="0.8"/><ellipse cx="101.3" cy="84.9" rx="0.8" ry="1.2" fill="#3a2614" opacity="0.8"/><ellipse cx="125.3" cy="127.8" rx="1.8" ry="0.6" fill="#3a2614" opacity="0.8"/><ellipse cx="107.8" cy="28.1" rx="1.7" ry="1.4" fill="#3a2614" opacity="0.8"/><ellipse cx="91.2" cy="17.2" rx="1.2" ry="1.3" fill="#3a2614" opacity="0.8"/><ellipse cx="19.2" cy="78.2" rx="1.4" ry="0.7" fill="#3a2614" opacity="0.8"/><ellipse cx="79.7" cy="5.6" rx="1.0" ry="0.9" fill="#3a2614" opacity="0.8"/><ellipse cx="9.2" cy="7.4" rx="1.6" ry="1.2" fill="#3a2614" opacity="0.8"/><ellipse cx="112.4" cy="17.2" rx="1.4" ry="0.9" fill="#3a2614" opacity="0.8"/><ellipse cx="76.8" cy="62.7" rx="2.1" ry="0.9" fill="#3a2614" opacity="0.8"/><ellipse cx="7.1" cy="89.3" rx="1.0" ry="1.1" fill="#3a2614" opacity="0.8"/><ellipse cx="64.7" cy="116.5" rx="1.6" ry="1.1" fill="#3a2614" opacity="0.8"/><ellipse cx="33.7" cy="70.6" rx="1.2" ry="1.2" fill="#3a2614" opacity="0.8"/><ellipse cx="66.2" cy="17.1" rx="1.1" ry="0.9" fill="#3a2614" opacity="0.8"/><ellipse cx="94.3" cy="23.0" rx="1.8" ry="1.1" fill="#3a2614" opacity="0.8"/><ellipse cx="10.9" cy="85.5" rx="0.9" ry="0.7" fill="#3a2614" opacity="0.8"/><ellipse cx="76.0" cy="30.5" rx="2.0" ry="1.0" fill="#3a2614" opacity="0.8"/><ellipse cx="41.4" cy="101.9" rx="0.8" ry="1.2" fill="#3a2614" opacity="0.8"/><ellipse cx="6.9" cy="19.3" rx="2.1" ry="1.1" fill="#3a2614" opacity="0.8"/><ellipse cx="28.6" cy="14.9" rx="2.2" ry="1.1" fill="#3a2614" opacity="0.8"/><ellipse cx="105.0" cy="17.9" rx="1.7" ry="0.9" fill="#3a2614" opacity="0.8"/><ellipse cx="30.1" cy="42.7" rx="1.7" ry="0.9" fill="#3a2614" opacity="0.8"/><ellipse cx="49.4" cy="17.5" rx="2.0" ry="1.1" fill="#3a2614" opacity="0.8"/><ellipse cx="103.0" cy="55.5" rx="2.0" ry="1.0" fill="#3a2614" opacity="0.8"/><ellipse cx="75.9" cy="73.4" rx="1.8" ry="0.9" fill="#3a2614" opacity="0.8"/><ellipse cx="12.4" cy="4.2" rx="1.1" ry="0.6" fill="#3a2614" opacity="0.8"/></svg><div style="position:absolute;left:143.29999999999995px;top:410.68px;font-size:22px;line-height:22px;font-weight:400;color:#0a0a0a;letter-spacing:0.55px;word-spacing:1px;-webkit-text-stroke:0.32px #0a0a0a;white-space:nowrap;">Component Insulation</div><div style="position:absolute;left:143.29999999999995px;top:438.68px;font-size:22px;line-height:22px;font-weight:400;color:#0a0a0a;letter-spacing:0.55px;word-spacing:1px;-webkit-text-stroke:0.32px #0a0a0a;white-space:nowrap;">Rigid RT</div><div style="position:absolute;left:407.5px;top:371.5px;width:128px;height:128px;background:#8f8f8f;"></div><svg style="position:absolute;left:407.5px;top:371.5px;overflow:hidden;mix-blend-mode:overlay" width="128" height="128"><filter id="nf31" filterUnits="userSpaceOnUse" x="0" y="0" width="128" height="128" color-interpolation-filters="sRGB"><feTurbulence type="fractalNoise" baseFrequency="0.25" numOctaves="3" seed="10"/><feColorMatrix values="0.18 0 0 0 0.41000000000000003  0.18 0 0 0 0.41000000000000003  0.18 0 0 0 0.41000000000000003  0 0 0 0 1"/></filter><rect width="128" height="128" filter="url(#nf31)"/></svg><div style="position:absolute;left:543.3px;top:424.68px;font-size:22px;line-height:22px;font-weight:400;color:#0a0a0a;letter-spacing:0.55px;word-spacing:1px;-webkit-text-stroke:0.32px #0a0a0a;white-space:nowrap;">Conc Lighter Small</div><div style="position:absolute;left:807.5px;top:371.5px;width:128px;height:128px;background:#959595;"></div><svg style="position:absolute;left:807.5px;top:371.5px;overflow:hidden;mix-blend-mode:overlay" width="128" height="128"><filter id="nf32" filterUnits="userSpaceOnUse" x="0" y="0" width="128" height="128" color-interpolation-filters="sRGB"><feTurbulence type="fractalNoise" baseFrequency="0.12 0.015" numOctaves="3" seed="11"/><feColorMatrix values="0.18 0 0 0 0.41000000000000003  0.18 0 0 0 0.41000000000000003  0.18 0 0 0 0.41000000000000003  0 0 0 0 1"/></filter><rect width="128" height="128" filter="url(#nf32)"/></svg><div style="position:absolute;left:943.3px;top:410.68px;font-size:22px;line-height:22px;font-weight:400;color:#0a0a0a;letter-spacing:0.55px;word-spacing:1px;-webkit-text-stroke:0.32px #0a0a0a;white-space:nowrap;">Concrete &lt;Surf Hatch&gt;</div><div style="position:absolute;left:943.3px;top:438.68px;font-size:22px;line-height:22px;font-weight:400;color:#0a0a0a;letter-spacing:0.55px;word-spacing:1px;-webkit-text-stroke:0.32px #0a0a0a;white-space:nowrap;">RT</div><div style="position:absolute;left:7.5px;top:515.5px;width:128px;height:128px;background:#b3b3b3;"></div><svg style="position:absolute;left:7.5px;top:515.5px;overflow:hidden;mix-blend-mode:overlay" width="128" height="128"><filter id="nf40" filterUnits="userSpaceOnUse" x="0" y="0" width="128" height="128" color-interpolation-filters="sRGB"><feTurbulence type="fractalNoise" baseFrequency="0.35" numOctaves="3" seed="12"/><feColorMatrix values="0.21000000000000002 0 0 0 0.395  0.21000000000000002 0 0 0 0.395  0.21000000000000002 0 0 0 0.395  0 0 0 0 1"/></filter><rect width="128" height="128" filter="url(#nf40)"/></svg><div style="position:absolute;left:143.29999999999995px;top:554.68px;font-size:22px;line-height:22px;font-weight:400;color:#0a0a0a;letter-spacing:0.55px;word-spacing:1px;-webkit-text-stroke:0.32px #0a0a0a;white-space:nowrap;">Concrete Lightest</div><div style="position:absolute;left:143.29999999999995px;top:582.68px;font-size:22px;line-height:22px;font-weight:400;color:#0a0a0a;letter-spacing:0.55px;word-spacing:1px;-webkit-text-stroke:0.32px #0a0a0a;white-space:nowrap;">&lt;Surf Hatch&gt; RT</div><div style="position:absolute;left:407.5px;top:515.5px;width:128px;height:128px;background:#a3a3a5;"></div><div style="position:absolute;left:543.3px;top:568.68px;font-size:22px;line-height:22px;font-weight:400;color:#0a0a0a;letter-spacing:0.55px;word-spacing:1px;-webkit-text-stroke:0.32px #0a0a0a;white-space:nowrap;">Cubicle Partitions</div><div style="position:absolute;left:807.5px;top:515.5px;width:128px;height:128px;background:#977f74;"></div><svg style="position:absolute;left:807.5px;top:515.5px;overflow:hidden;mix-blend-mode:overlay" width="128" height="128"><filter id="nf42" filterUnits="userSpaceOnUse" x="0" y="0" width="128" height="128" color-interpolation-filters="sRGB"><feTurbulence type="fractalNoise" baseFrequency="0.18" numOctaves="3" seed="14"/><feColorMatrix values="0.15000000000000002 0 0 0 0.425  0.15000000000000002 0 0 0 0.425  0.15000000000000002 0 0 0 0.425  0 0 0 0 1"/></filter><rect width="128" height="128" filter="url(#nf42)"/></svg><div style="position:absolute;left:943.3px;top:568.68px;font-size:22px;line-height:22px;font-weight:400;color:#0a0a0a;letter-spacing:0.55px;word-spacing:1px;-webkit-text-stroke:0.32px #0a0a0a;white-space:nowrap;">Edenhaul Beaufort</div><div style="position:absolute;left:7.5px;top:659.5px;width:128px;height:128px;background:#d5d5d8;"></div><svg style="position:absolute;left:7.5px;top:659.5px;overflow:hidden;mix-blend-mode:overlay" width="128" height="128"><filter id="nf50" filterUnits="userSpaceOnUse" x="0" y="0" width="128" height="128" color-interpolation-filters="sRGB"><feTurbulence type="fractalNoise" baseFrequency="0.3" numOctaves="3" seed="15"/><feColorMatrix values="0.33 0 0 0 0.33499999999999996  0.33 0 0 0 0.33499999999999996  0.33 0 0 0 0.33499999999999996  0 0 0 0 1"/></filter><rect width="128" height="128" filter="url(#nf50)"/></svg><div style="position:absolute;left:143.29999999999995px;top:698.68px;font-size:22px;line-height:22px;font-weight:400;color:#0a0a0a;letter-spacing:0.55px;word-spacing:1px;-webkit-text-stroke:0.32px #0a0a0a;white-space:nowrap;">Franke Metal Chrome</div><div style="position:absolute;left:143.29999999999995px;top:726.68px;font-size:22px;line-height:22px;font-weight:400;color:#0a0a0a;letter-spacing:0.55px;word-spacing:1px;-webkit-text-stroke:0.32px #0a0a0a;white-space:nowrap;">Brushed RT</div><div style="position:absolute;left:407.5px;top:659.5px;width:128px;height:128px;background:linear-gradient(#fbfdfd 5%,#c9cecf 50%,#7c898b);"></div><div style="position:absolute;left:543.3px;top:712.68px;font-size:22px;line-height:22px;font-weight:400;color:#0a0a0a;letter-spacing:0.55px;word-spacing:1px;-webkit-text-stroke:0.32px #0a0a0a;white-space:nowrap;">Glass Blue 02 RT</div><div style="position:absolute;left:807.5px;top:659.5px;width:128px;height:128px;background:linear-gradient(#b2c1cc,#8a979e 45%,#575d62 80%,#393a3e);"></div><div style="position:absolute;left:943.3px;top:712.68px;font-size:22px;line-height:22px;font-weight:400;color:#0a0a0a;letter-spacing:0.55px;word-spacing:1px;-webkit-text-stroke:0.32px #0a0a0a;white-space:nowrap;">Glass Clear Blue RT</div><div style="position:absolute;left:7.5px;top:803.5px;width:128px;height:128px;background:linear-gradient(#e4e4e4,#c6c6c6 30%,#9c9c9c 55%,#5c5c5c 78%,#2a2a2a);"></div><div style="position:absolute;left:143.29999999999995px;top:856.68px;font-size:22px;line-height:22px;font-weight:400;color:#0a0a0a;letter-spacing:0.55px;word-spacing:1px;-webkit-text-stroke:0.32px #0a0a0a;white-space:nowrap;">Glass Clear RT</div><div style="position:absolute;left:407.5px;top:803.5px;width:128px;height:128px;background:linear-gradient(#f6f6f6,#cfcfcf 45%,#8b8b8b);"></div><div style="position:absolute;left:543.3px;top:856.68px;font-size:22px;line-height:22px;font-weight:400;color:#0a0a0a;letter-spacing:0.55px;word-spacing:1px;-webkit-text-stroke:0.32px #0a0a0a;white-space:nowrap;">Glass Gray RT</div><div style="position:absolute;left:807.5px;top:803.5px;width:128px;height:128px;background:linear-gradient(#fff 12%,#e2e2e2 35%,#a9a9a9 60%,#3c3c3c 85%,#000);"></div><div style="position:absolute;left:943.3px;top:856.68px;font-size:22px;line-height:22px;font-weight:400;color:#0a0a0a;letter-spacing:0.55px;word-spacing:1px;-webkit-text-stroke:0.32px #0a0a0a;white-space:nowrap;">Glass Mirrored</div><div style="position:absolute;left:7.5px;top:947.5px;width:128px;height:128px;background:linear-gradient(#d0d1d0,#9ea3a3 55%,#5b6565);"></div><div style="position:absolute;left:143.29999999999995px;top:1000.68px;font-size:22px;line-height:22px;font-weight:400;color:#0a0a0a;letter-spacing:0.55px;word-spacing:1px;-webkit-text-stroke:0.32px #0a0a0a;white-space:nowrap;">Glass Tinted</div><div style="position:absolute;left:407.5px;top:947.5px;width:128px;height:128px;background:linear-gradient(#919191,#656565);"></div><div style="position:absolute;left:543.3px;top:1000.68px;font-size:22px;line-height:22px;font-weight:400;color:#0a0a0a;letter-spacing:0.55px;word-spacing:1px;-webkit-text-stroke:0.32px #0a0a0a;white-space:nowrap;">Glass Tinted RT</div><div style="position:absolute;left:807.5px;top:947.5px;width:128px;height:128px;background:#8c8b87;"></div><div style="position:absolute;left:943.3px;top:986.68px;font-size:22px;line-height:22px;font-weight:400;color:#0a0a0a;letter-spacing:0.55px;word-spacing:1px;-webkit-text-stroke:0.32px #0a0a0a;white-space:nowrap;">Howdens Joinery Wood</div><div style="position:absolute;left:943.3px;top:1014.68px;font-size:22px;line-height:22px;font-weight:400;color:#0a0a0a;letter-spacing:0.55px;word-spacing:1px;-webkit-text-stroke:0.32px #0a0a0a;white-space:nowrap;">Dark Grey Oak RT</div><div style="position:absolute;left:7.5px;top:1091.5px;width:128px;height:128px;background:linear-gradient(#e8e8e8,#d6d6d6 50%,#b1b1b1);"></div><div style="position:absolute;left:143.29999999999995px;top:1144.68px;font-size:22px;line-height:22px;font-weight:400;color:#0a0a0a;letter-spacing:0.55px;word-spacing:1px;-webkit-text-stroke:0.32px #0a0a0a;white-space:nowrap;">IFC_Translucent_40</div><div style="position:absolute;left:407.5px;top:1091.5px;width:128px;height:128px;background:#a0978f;"></div><div style="position:absolute;left:543.3px;top:1144.68px;font-size:22px;line-height:22px;font-weight:400;color:#0a0a0a;letter-spacing:0.55px;word-spacing:1px;-webkit-text-stroke:0.32px #0a0a0a;white-space:nowrap;">Louvre pearl grey</div><div style="position:absolute;left:807.5px;top:1091.5px;width:128px;height:128px;background:#dcdcdc;"></div><div style="position:absolute;left:943.3px;top:1130.68px;font-size:22px;line-height:22px;font-weight:400;color:#0a0a0a;letter-spacing:0.55px;word-spacing:1px;-webkit-text-stroke:0.32px #0a0a0a;white-space:nowrap;">Material-A-JP11-</div><div style="position:absolute;left:943.3px;top:1158.68px;font-size:22px;line-height:22px;font-weight:400;color:#0a0a0a;letter-spacing:0.55px;word-spacing:1px;-webkit-text-stroke:0.32px #0a0a0a;white-space:nowrap;">CavityWallAirspace</div><div style="position:absolute;left:7.5px;top:1235.5px;width:128px;height:128px;background:#d3c2ab;"></div><div style="position:absolute;left:143.29999999999995px;top:1260.68px;font-size:22px;line-height:22px;font-weight:400;color:#0a0a0a;letter-spacing:0.55px;word-spacing:1px;-webkit-text-stroke:0.32px #0a0a0a;white-space:nowrap;">Merillat Wood Maple-</div><div style="position:absolute;left:143.29999999999995px;top:1288.68px;font-size:22px;line-height:22px;font-weight:400;color:#0a0a0a;letter-spacing:0.55px;word-spacing:1px;-webkit-text-stroke:0.32px #0a0a0a;white-space:nowrap;">Biscotti with Cinder</div><div style="position:absolute;left:143.29999999999995px;top:1316.68px;font-size:22px;line-height:22px;font-weight:400;color:#0a0a0a;letter-spacing:0.55px;word-spacing:1px;-webkit-text-stroke:0.32px #0a0a0a;white-space:nowrap;">Glaze RT</div><div style="position:absolute;left:407.5px;top:1235.5px;width:128px;height:128px;background:#c4a986;"></div><div style="position:absolute;left:543.3px;top:1274.68px;font-size:22px;line-height:22px;font-weight:400;color:#0a0a0a;letter-spacing:0.55px;word-spacing:1px;-webkit-text-stroke:0.32px #0a0a0a;white-space:nowrap;">Merillat Wood Maple-</div><div style="position:absolute;left:543.3px;top:1302.68px;font-size:22px;line-height:22px;font-weight:400;color:#0a0a0a;letter-spacing:0.55px;word-spacing:1px;-webkit-text-stroke:0.32px #0a0a0a;white-space:nowrap;">Natural RT</div><div style="position:absolute;left:807.5px;top:1235.5px;width:128px;height:128px;background:#cbcbcd;"></div><svg style="position:absolute;left:807.5px;top:1235.5px;overflow:hidden;mix-blend-mode:overlay" width="128" height="128"><filter id="nf92" filterUnits="userSpaceOnUse" x="0" y="0" width="128" height="128" color-interpolation-filters="sRGB"><feTurbulence type="fractalNoise" baseFrequency="0.6" numOctaves="3" seed="29"/><feColorMatrix values="0.30000000000000004 0 0 0 0.35  0.30000000000000004 0 0 0 0.35  0.30000000000000004 0 0 0 0.35  0 0 0 0 1"/></filter><rect width="128" height="128" filter="url(#nf92)"/></svg><div style="position:absolute;left:943.3px;top:1274.68px;font-size:22px;line-height:22px;font-weight:400;color:#0a0a0a;letter-spacing:0.55px;word-spacing:1px;-webkit-text-stroke:0.32px #0a0a0a;white-space:nowrap;">Metal Aluminum</div><div style="position:absolute;left:943.3px;top:1302.68px;font-size:22px;line-height:22px;font-weight:400;color:#0a0a0a;letter-spacing:0.55px;word-spacing:1px;-webkit-text-stroke:0.32px #0a0a0a;white-space:nowrap;">Brushed RT</div><div style="position:absolute;left:7.5px;top:1379.5px;width:128px;height:128px;background:#d2d2d5;"></div><svg style="position:absolute;left:7.5px;top:1379.5px;overflow:hidden;mix-blend-mode:overlay" width="128" height="128"><filter id="nf100" filterUnits="userSpaceOnUse" x="0" y="0" width="128" height="128" color-interpolation-filters="sRGB"><feTurbulence type="fractalNoise" baseFrequency="0.2" numOctaves="3" seed="30"/><feColorMatrix values="0.21000000000000002 0 0 0 0.395  0.21000000000000002 0 0 0 0.395  0.21000000000000002 0 0 0 0.395  0 0 0 0 1"/></filter><rect width="128" height="128" filter="url(#nf100)"/></svg><div style="position:absolute;left:143.29999999999995px;top:1418.68px;font-size:22px;line-height:22px;font-weight:400;color:#0a0a0a;letter-spacing:0.55px;word-spacing:1px;-webkit-text-stroke:0.32px #0a0a0a;white-space:nowrap;">Metal Chrome Brushed</div><div style="position:absolute;left:143.29999999999995px;top:1446.68px;font-size:22px;line-height:22px;font-weight:400;color:#0a0a0a;letter-spacing:0.55px;word-spacing:1px;-webkit-text-stroke:0.32px #0a0a0a;white-space:nowrap;">RT</div><div style="position:absolute;left:407.5px;top:1379.5px;width:128px;height:128px;background:#e3e3e6;"></div><div style="position:absolute;left:543.3px;top:1432.68px;font-size:22px;line-height:22px;font-weight:400;color:#0a0a0a;letter-spacing:0.55px;word-spacing:1px;-webkit-text-stroke:0.32px #0a0a0a;white-space:nowrap;">Metal Chrome Plate RT</div><div style="position:absolute;left:807.5px;top:1379.5px;width:128px;height:128px;background:#e3e3e6;"></div><div style="position:absolute;left:943.3px;top:1432.68px;font-size:22px;line-height:22px;font-weight:400;color:#0a0a0a;letter-spacing:0.55px;word-spacing:1px;-webkit-text-stroke:0.32px #0a0a0a;white-space:nowrap;">Metal Chrome RT</div><div style="position:absolute;left:7.5px;top:1523.5px;width:128px;height:128px;background:#9a9a9a;"></div><div style="position:absolute;left:143.29999999999995px;top:1576.68px;font-size:22px;line-height:22px;font-weight:400;color:#0a0a0a;letter-spacing:0.55px;word-spacing:1px;-webkit-text-stroke:0.32px #0a0a0a;white-space:nowrap;">Metal Lead 02 RT</div><div style="position:absolute;left:407.5px;top:1523.5px;width:128px;height:128px;background:#cac2b8;"></div><svg style="position:absolute;left:407.5px;top:1523.5px;overflow:hidden;mix-blend-mode:overlay" width="128" height="128"><filter id="nf111" filterUnits="userSpaceOnUse" x="0" y="0" width="128" height="128" color-interpolation-filters="sRGB"><feTurbulence type="fractalNoise" baseFrequency="0.15" numOctaves="3" seed="34"/><feColorMatrix values="0.18 0 0 0 0.41000000000000003  0.18 0 0 0 0.41000000000000003  0.18 0 0 0 0.41000000000000003  0 0 0 0 1"/></filter><rect width="128" height="128" filter="url(#nf111)"/></svg><div style="position:absolute;left:543.3px;top:1576.68px;font-size:22px;line-height:22px;font-weight:400;color:#0a0a0a;letter-spacing:0.55px;word-spacing:1px;-webkit-text-stroke:0.32px #0a0a0a;white-space:nowrap;">Metal Nickel RT</div><div style="position:absolute;left:807.5px;top:1523.5px;width:128px;height:128px;background:#898989;"></div><div style="position:absolute;left:943.3px;top:1562.68px;font-size:22px;line-height:22px;font-weight:400;color:#0a0a0a;letter-spacing:0.55px;word-spacing:1px;-webkit-text-stroke:0.32px #0a0a0a;white-space:nowrap;">Metal Steel Polished</div><div style="position:absolute;left:943.3px;top:1590.68px;font-size:22px;line-height:22px;font-weight:400;color:#0a0a0a;letter-spacing:0.55px;word-spacing:1px;-webkit-text-stroke:0.32px #0a0a0a;white-space:nowrap;">RT</div></div><div style="position:absolute;left:2115.5px;top:110px;width:5px;height:1679px;border:1px solid #cdcdcd;border-bottom:none;box-sizing:border-box;background:#f4f4f4;"></div><div style="position:absolute;left:2108px;top:942px;width:4px;height:4px;background:#8e8e8e;"></div><div style="position:absolute;left:2108px;top:952px;width:4px;height:4px;background:#8e8e8e;"></div><div style="position:absolute;left:2108px;top:962px;width:4px;height:4px;background:#8e8e8e;"></div><div style="position:absolute;left:20px;top:1797.5px;width:200px;height:33px;background:#fff;border:1px solid #cdcdcd;border-radius:6px;box-sizing:border-box;box-shadow:0 1px 1px rgba(0,0,0,0.10);"></div><div style="position:absolute;left:34.0px;top:1802.88px;font-size:22px;line-height:22px;font-weight:400;color:#222;letter-spacing:0.68px;-webkit-text-stroke:0.32px #222;white-space:nowrap;">New Resource...</div><div style="position:absolute;left:253.5px;top:1797.5px;width:167.0px;height:33px;background:#fff;border:1px solid #cdcdcd;border-radius:6px;box-sizing:border-box;box-shadow:0 1px 1px rgba(0,0,0,0.10);"></div><div style="position:absolute;left:267.0px;top:1802.88px;font-size:22px;line-height:22px;font-weight:400;color:#222;letter-spacing:0.68px;-webkit-text-stroke:0.32px #222;white-space:nowrap;">New Folder...</div><div style="position:absolute;left:453px;top:1797.5px;width:323.5px;height:33px;background:#fff;border:1px solid #cdcdcd;border-radius:6px;box-sizing:border-box;box-shadow:0 1px 1px rgba(0,0,0,0.10);"></div><div style="position:absolute;left:467.0px;top:1802.88px;font-size:22px;line-height:22px;font-weight:400;color:#222;letter-spacing:0.68px;-webkit-text-stroke:0.32px #222;white-space:nowrap;">New Renderworks Texture...</div><div style="position:absolute;left:1022px;top:1802.88px;font-size:22px;line-height:22px;font-weight:400;color:#222;letter-spacing:1.0px;-webkit-text-stroke:0.32px #222;white-space:nowrap;">65 Items</div><div style="position:absolute;left:2118px;top:1816px;width:4px;height:4px;background:#999;"></div><div style="position:absolute;left:2108px;top:1826px;width:4px;height:4px;background:#999;"></div><div style="position:absolute;left:2118px;top:1826px;width:4px;height:4px;background:#999;"></div><div style="position:absolute;left:1944px;top:1001.5px;width:736px;height:230.5px;border-radius:11px;overflow:hidden;box-shadow:0 6px 22px rgba(0,0,0,0.28),0 0 0 0.5px rgba(0,0,0,0.18);background:linear-gradient(100deg,#f3f2f1 0%,#eceae8 20%,#dcd7d2 32%,#d9d5d0 55%,#d3d1d2 80%,#cfced3 100%);"><div style="position:absolute;left:0;top:95.5px;width:736px;height:2.5px;background:#c6c3c0;"></div><div style="position:absolute;left:0;top:146.79999999999995px;width:736px;height:37.7px;background:linear-gradient(90deg,#ec995e,#e98b45 25%,#e4883f);"></div><div style="position:absolute;left:43px;top:14.49px;font-size:26px;line-height:26px;font-weight:400;color:#242424;letter-spacing:1.05px;-webkit-text-stroke:0.32px #242424;white-space:nowrap;">View As</div><div style="position:absolute;left:43px;top:52.89px;font-size:26px;line-height:26px;font-weight:400;color:#242424;letter-spacing:1.05px;-webkit-text-stroke:0.32px #242424;white-space:nowrap;">Sort By</div><div style="position:absolute;left:43px;top:114.79px;font-size:26px;line-height:26px;font-weight:400;color:#242424;letter-spacing:1.05px;-webkit-text-stroke:0.32px #242424;white-space:nowrap;">Extract Image(s)...</div><div style="position:absolute;left:43px;top:151.99px;font-size:26px;line-height:26px;font-weight:400;color:#ffffff;letter-spacing:1.05px;-webkit-text-stroke:0.32px #ffffff;white-space:nowrap;">New Renderworks Texture in Base BIM Floor Plan...</div><div style="position:absolute;left:43px;top:190.49px;font-size:26px;line-height:26px;font-weight:400;color:#242424;letter-spacing:1.05px;-webkit-text-stroke:0.32px #242424;white-space:nowrap;">New Folder in Base BIM Floor Plan...</div><svg style="position:absolute;left:694px;top:18.0px" width="18" height="19"><path d="M0 0 L17.5 9.5 L0 19 Z" fill="#161616"/></svg><svg style="position:absolute;left:694px;top:55.5px" width="18" height="19"><path d="M0 0 L17.5 9.5 L0 19 Z" fill="#161616"/></svg></div>
</body></html>
